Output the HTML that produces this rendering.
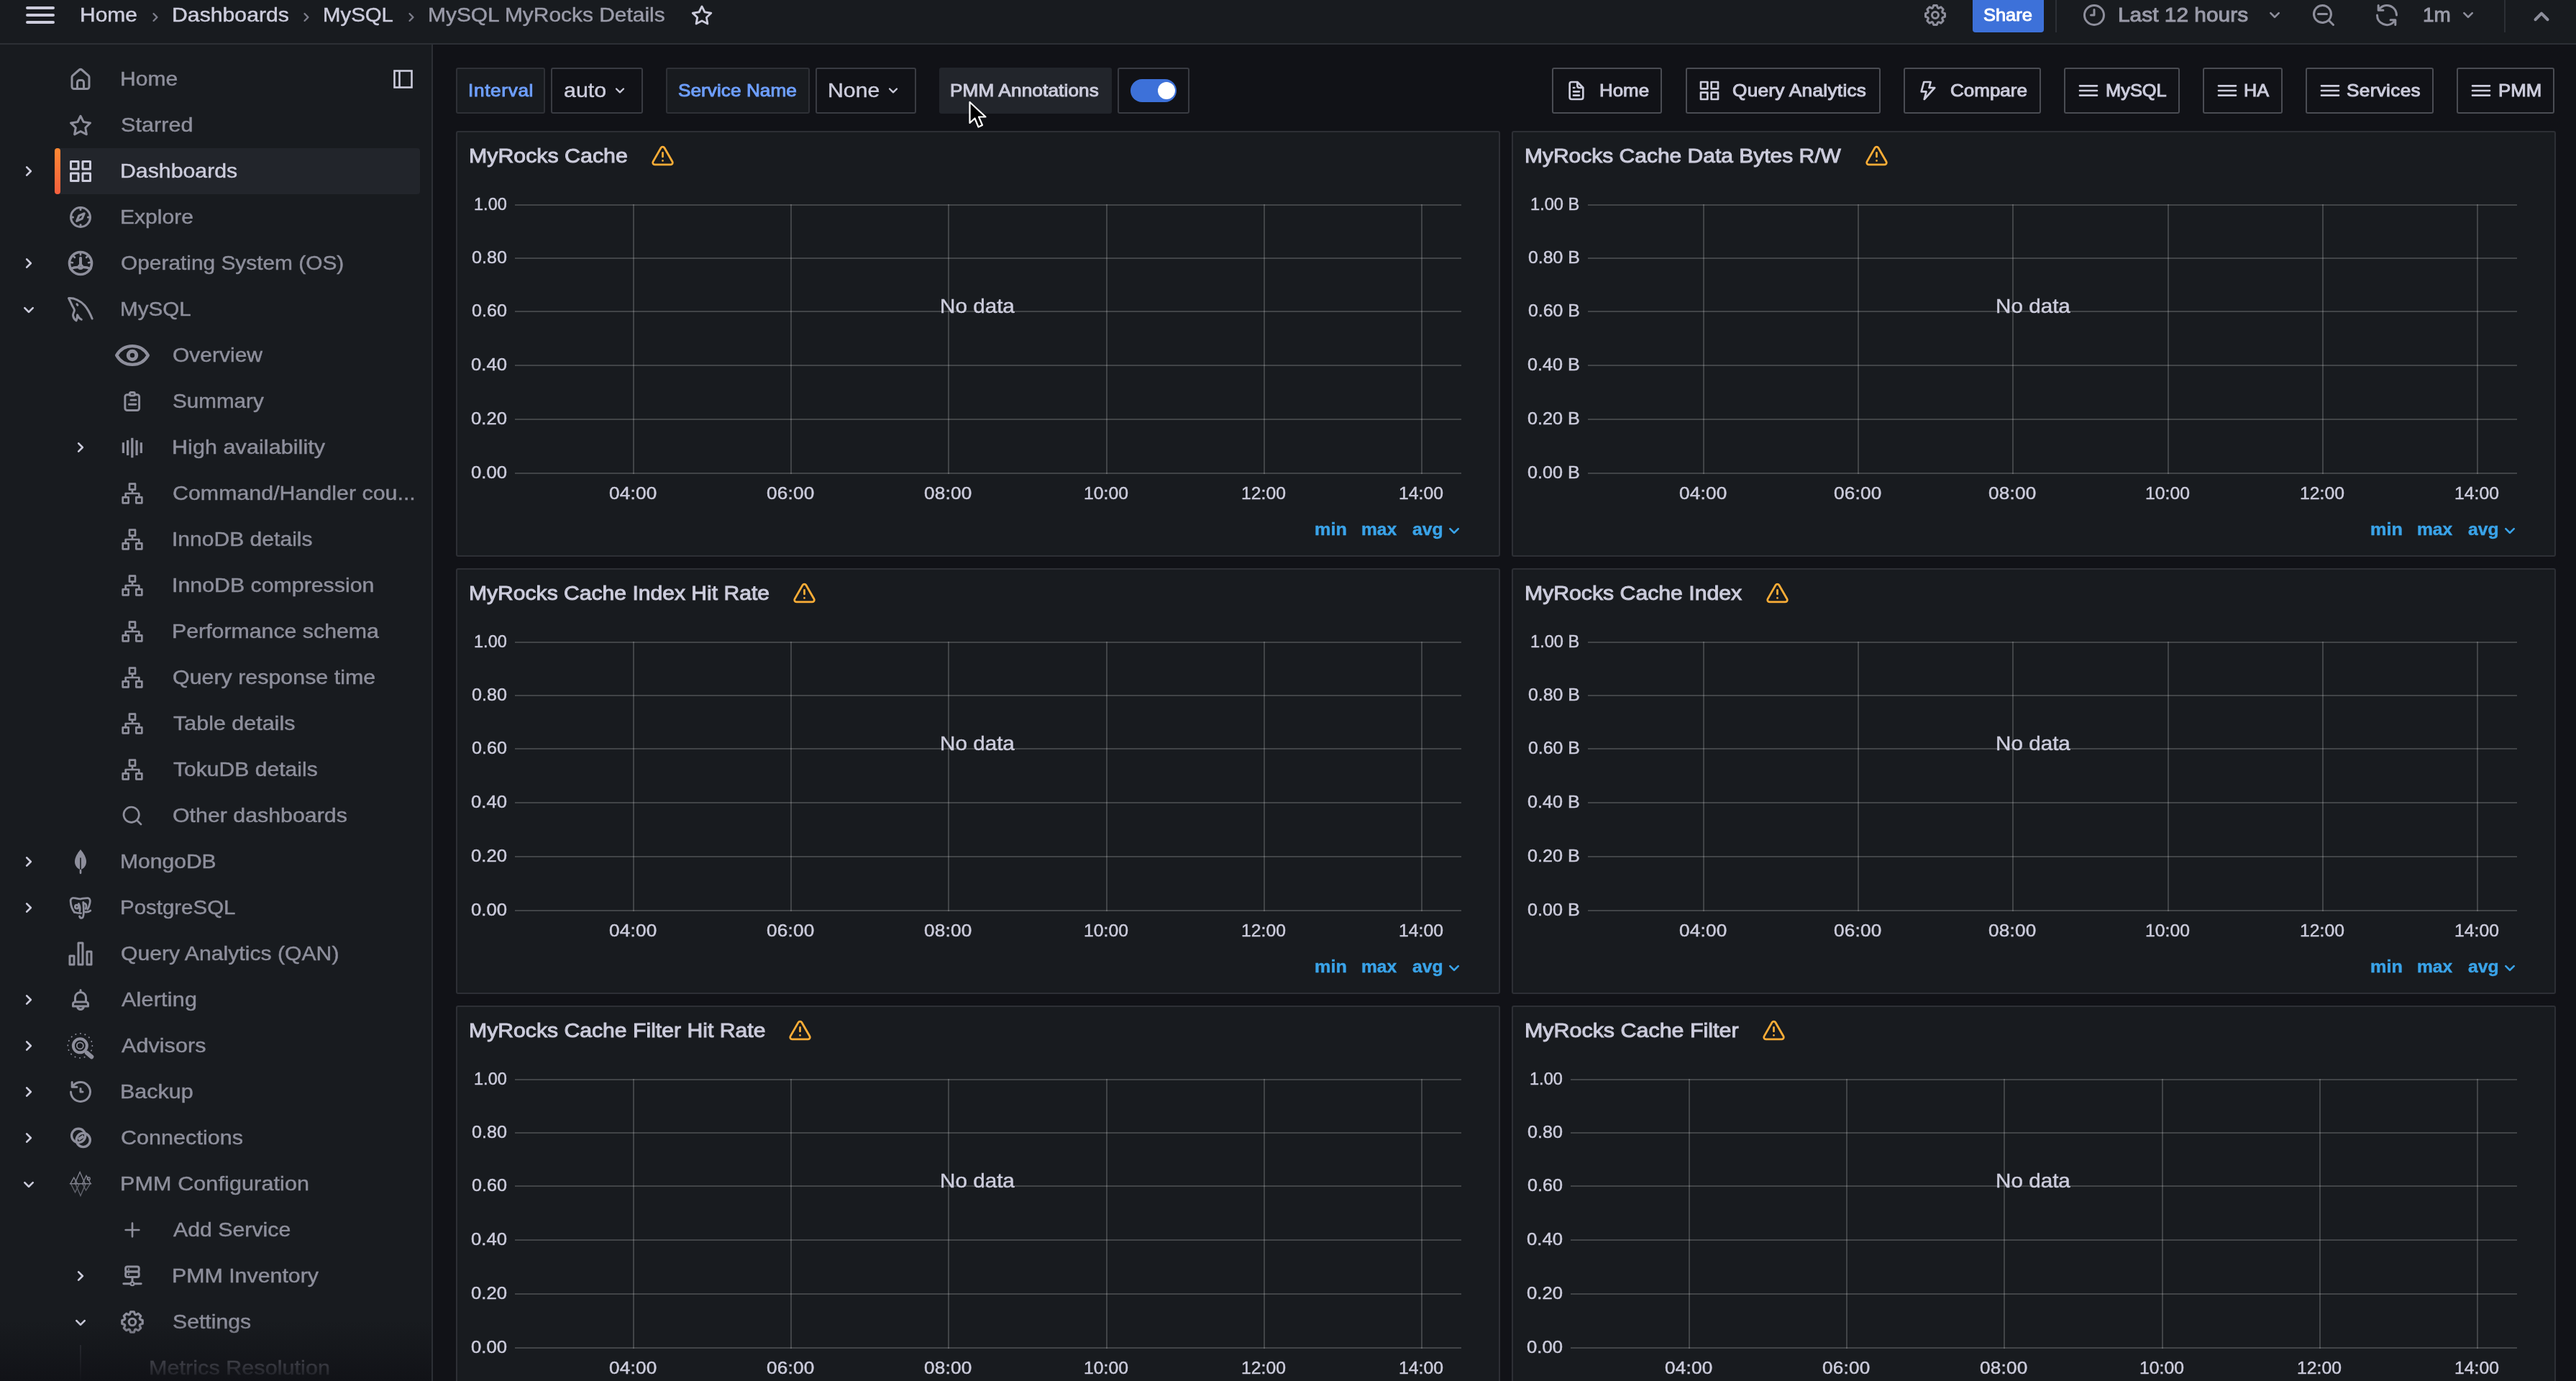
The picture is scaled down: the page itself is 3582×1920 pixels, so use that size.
<!DOCTYPE html>
<html lang="en"><head><meta charset="utf-8"><title>MySQL MyRocks Details - Dashboards - Grafana</title><style>
html,body{margin:0;padding:0}
header,nav,main,section{display:block;position:static;margin:0;padding:0}
body{width:3582px;height:1920px;overflow:hidden;position:relative;background:#111217;
font-family:"Liberation Sans",sans-serif;-webkit-font-smoothing:antialiased}
#app{position:absolute;left:0;top:0;width:3582px;height:1920px;overflow:hidden;will-change:transform}
.a{position:absolute;box-sizing:content-box}
.t{position:absolute;white-space:nowrap;line-height:1;display:block;transform-origin:0 0}
.panel{width:1448px;height:588px;background:#181b1f;border:2px solid #2d2f35;border-radius:3px}
</style></head>
<body>
<div id="app">
<header aria-label="Top bar">
<div class="a" id="topbar" style="left:0;top:0;width:3582px;height:60px;background:#181b1f;border-bottom:2px solid #2c2f35"></div>
<svg class="a" style="left:32.00px;top:-3.00px" width="48" height="48" viewBox="0 0 24 24" fill="#ccccdc"><path d="M3,8H21a1,1,0,0,0,0-2H3A1,1,0,0,0,3,8Zm18,8H3a1,1,0,0,0,0,2H21a1,1,0,0,0,0-2Zm0-5H3a1,1,0,0,0,0,2H21a1,1,0,0,0,0-2Z"/></svg>
<span class="t" style="left:110.86px;top:7.30px;font-size:28px;letter-spacing:0.000px;color:#ccccdc;transform:scaleX(1.0705);-webkit-text-stroke:0.45px #ccccdc;">Home</span>
<svg class="a" style="left:202.00px;top:9.50px" width="28" height="28" viewBox="0 0 24 24" fill="#7d7e8b"><path d="M14.83,11.29,10.59,7.05a1,1,0,0,0-1.42,0,1,1,0,0,0,0,1.41L12.71,12,9.17,15.54a1,1,0,0,0,0,1.41,1,1,0,0,0,.71.29,1,1,0,0,0,.71-.29l4.24-4.24A1,1,0,0,0,14.83,11.29Z"/></svg>
<span class="t" style="left:238.54px;top:7.30px;font-size:28px;letter-spacing:0.000px;color:#ccccdc;transform:scaleX(1.0792);-webkit-text-stroke:0.45px #ccccdc;">Dashboards</span>
<svg class="a" style="left:412.00px;top:9.50px" width="28" height="28" viewBox="0 0 24 24" fill="#7d7e8b"><path d="M14.83,11.29,10.59,7.05a1,1,0,0,0-1.42,0,1,1,0,0,0,0,1.41L12.71,12,9.17,15.54a1,1,0,0,0,0,1.41,1,1,0,0,0,.71.29,1,1,0,0,0,.71-.29l4.24-4.24A1,1,0,0,0,14.83,11.29Z"/></svg>
<span class="t" style="left:448.70px;top:7.30px;font-size:28px;letter-spacing:0.000px;color:#ccccdc;transform:scaleX(1.0487);-webkit-text-stroke:0.45px #ccccdc;">MySQL</span>
<svg class="a" style="left:558.00px;top:9.50px" width="28" height="28" viewBox="0 0 24 24" fill="#7d7e8b"><path d="M14.83,11.29,10.59,7.05a1,1,0,0,0-1.42,0,1,1,0,0,0,0,1.41L12.71,12,9.17,15.54a1,1,0,0,0,0,1.41,1,1,0,0,0,.71.29,1,1,0,0,0,.71-.29l4.24-4.24A1,1,0,0,0,14.83,11.29Z"/></svg>
<span class="t" style="left:594.86px;top:7.30px;font-size:28px;letter-spacing:0.000px;color:#9a9ba9;transform:scaleX(1.0684);-webkit-text-stroke:0.45px #9a9ba9;">MySQL MyRocks Details</span>
<svg class="a" style="left:959.00px;top:4.00px" width="34" height="34" viewBox="0 0 24 24" fill="#ccccdc"><path d="M22,9.67A1,1,0,0,0,21.14,9l-5.69-.83L12.9,3a1,1,0,0,0-1.8,0L8.55,8.16,2.86,9a1,1,0,0,0-.81.68,1,1,0,0,0,.25,1l4.13,4-1,5.68A1,1,0,0,0,6.9,21.44L12,18.77l5.1,2.67a.93.93,0,0,0,.46.12,1,1,0,0,0,.59-.19,1,1,0,0,0,.4-1l-1-5.68,4.13-4A1,1,0,0,0,22,9.67Zm-6.15,4a1,1,0,0,0-.29.88l.72,4.2-3.76-2a1.06,1.06,0,0,0-.94,0l-3.76,2,.72-4.2a1,1,0,0,0-.29-.88l-3-3,4.21-.61a1,1,0,0,0,.76-.55L12,5.7l1.88,3.82a1,1,0,0,0,.76.55l4.21.61Z"/></svg>
<svg class="a" style="left:2673.00px;top:2.70px" width="36" height="36" viewBox="0 0 24 24" fill="#8e8f9c"><path d="M21.32,9.55l-1.89-.63.89-1.78A1,1,0,0,0,20.13,6L18,3.87a1,1,0,0,0-1.15-.19l-1.78.89-.63-1.89A1,1,0,0,0,13.5,2h-3a1,1,0,0,0-.95.68L8.92,4.57,7.14,3.68A1,1,0,0,0,6,3.87L3.87,6a1,1,0,0,0-.19,1.15l.89,1.78-1.89.63A1,1,0,0,0,2,10.5v3a1,1,0,0,0,.68.95l1.89.63-.89,1.78A1,1,0,0,0,3.87,18L6,20.13a1,1,0,0,0,1.15.19l1.78-.89.63,1.89a1,1,0,0,0,.95.68h3a1,1,0,0,0,.95-.68l.63-1.89,1.78.89A1,1,0,0,0,18,20.13L20.13,18a1,1,0,0,0,.19-1.15l-.89-1.78,1.89-.63A1,1,0,0,0,22,13.5v-3A1,1,0,0,0,21.32,9.55ZM20,12.78l-1.2.4A2,2,0,0,0,17.64,16l.57,1.14-1.1,1.1L16,17.64a2,2,0,0,0-2.79,1.16l-.4,1.2H11.22l-.4-1.2A2,2,0,0,0,8,17.64l-1.14.57-1.1-1.1L6.36,16A2,2,0,0,0,5.2,13.18L4,12.78V11.22l1.2-.4A2,2,0,0,0,6.36,8L5.79,6.89l1.1-1.1L8,6.36A2,2,0,0,0,10.82,5.2l.4-1.2h1.56l.4,1.2A2,2,0,0,0,16,6.36l1.14-.57,1.1,1.1L17.64,8a2,2,0,0,0,1.16,2.79l1.2.4ZM12,8a4,4,0,1,0,4,4A4,4,0,0,0,12,8Zm0,6a2,2,0,1,1,2-2A2,2,0,0,1,12,14Z"/></svg>
<div class="a" style="left:2743px;top:-4px;width:99px;height:49px;background:#3d71d9;border-radius:4px;"></div>
<span class="t" style="left:2757.94px;top:8.68px;font-size:24px;letter-spacing:0.000px;color:#ffffff;transform:scaleX(1.0591);-webkit-text-stroke:0.95px #ffffff;">Share</span>
<div class="a" style="left:2858px;top:0px;width:2px;height:45px;background:#2c2f35;"></div>
<svg class="a" style="left:2894.00px;top:2.70px" width="36" height="36" viewBox="0 0 24 24" fill="#8e8f9c"><path d="M12,2A10,10,0,1,0,22,12,10.01114,10.01114,0,0,0,12,2Zm0,18a8,8,0,1,1,8-8A8.00917,8.00917,0,0,1,12,20ZM12,6a.99974.99974,0,0,0-1,1v4H9a1,1,0,0,0,0,2h3a.99974.99974,0,0,0,1-1V7A.99974.99974,0,0,0,12,6Z"/></svg>
<span class="t" style="left:2945.27px;top:7.30px;font-size:28px;letter-spacing:0.000px;color:#9a9ba9;transform:scaleX(1.0674);-webkit-text-stroke:0.95px #9a9ba9;">Last 12 hours</span>
<svg class="a" style="left:3147.00px;top:5.20px" width="32" height="32" viewBox="0 0 24 24" fill="#8e8f9c"><path d="M17,9.17a1,1,0,0,0-1.41,0L12,12.71,8.46,9.17a1,1,0,0,0-1.41,0,1,1,0,0,0,0,1.42l4.24,4.24a1,1,0,0,0,1.42,0L17,10.59A1,1,0,0,0,17,9.17Z"/></svg>
<svg class="a" style="left:3213.00px;top:2.70px" width="36" height="36" viewBox="0 0 24 24" fill="#8e8f9c"><path d="M21.71,20.29,18,16.61A9,9,0,1,0,16.61,18l3.68,3.68a1,1,0,0,0,1.42,0A1,1,0,0,0,21.71,20.29ZM11,18a7,7,0,1,1,7-7A7,7,0,0,1,11,18Zm4-8H7a1,1,0,0,0,0,2h8a1,1,0,0,0,0-2Z"/></svg>
<svg class="a" style="left:3301.00px;top:2.70px" width="36" height="36" viewBox="0 0 24 24" fill="#8e8f9c"><path d="M19.91,15.51H15.38a1,1,0,0,0,0,2h2.4A8,8,0,0,1,4,12a1,1,0,0,0-2,0,10,10,0,0,0,16.88,7.23V21a1,1,0,0,0,2,0V16.5A1,1,0,0,0,19.91,15.51ZM12,2A10,10,0,0,0,5.12,4.77V3a1,1,0,0,0-2,0V7.5a1,1,0,0,0,1,1h4.5a1,1,0,0,0,0-2H6.22A8,8,0,0,1,20,12a1,1,0,0,0,2,0A10,10,0,0,0,12,2Z"/></svg>
<span class="t" style="left:3369.00px;top:7.30px;font-size:28px;letter-spacing:0.000px;color:#9a9ba9;transform:scaleX(0.9980);-webkit-text-stroke:0.95px #9a9ba9;">1m</span>
<svg class="a" style="left:3416.00px;top:5.20px" width="32" height="32" viewBox="0 0 24 24" fill="#8e8f9c"><path d="M17,9.17a1,1,0,0,0-1.41,0L12,12.71,8.46,9.17a1,1,0,0,0-1.41,0,1,1,0,0,0,0,1.42l4.24,4.24a1,1,0,0,0,1.42,0L17,10.59A1,1,0,0,0,17,9.17Z"/></svg>
<div class="a" style="left:3482px;top:0px;width:2px;height:45px;background:#2c2f35;"></div>
<svg class="a" style="left:3510.00px;top:-1.20px" width="48" height="48" viewBox="0 0 24 24" fill="#8e8f9c"><path d="M17,13.41,12.71,9.17a1,1,0,0,0-1.42,0L7.05,13.41a1,1,0,0,0,0,1.42,1,1,0,0,0,1.41,0L12,11.29l3.54,3.54a1,1,0,0,0,.7.29,1,1,0,0,0,.71-.29A1,1,0,0,0,17,13.41Z"/></svg>
</header>
<nav aria-label="Navigation">
<div class="a" id="sidebar" style="left:0;top:62px;width:600px;height:1858px;background:#181b1f;border-right:2px solid #2c2f35"></div>
<div class="a" style="left:76px;top:206px;width:508px;height:64px;background:#22252b;border-radius:4px"></div>
<div class="a" style="left:76px;top:206px;width:8px;height:64px;border-radius:4px;background:linear-gradient(180deg,#ff8833,#f55f3e)"></div>
<svg class="a" style="left:545px;top:95px" width="32" height="30" viewBox="0 0 32 30" fill="none" stroke="#ccccdc" stroke-width="2.6"><rect x="3.5" y="3.5" width="24" height="23"/><line x1="10.5" y1="3.5" x2="10.5" y2="26.5"/></svg>
<svg class="a" style="left:94.00px;top:92.00px" width="36" height="36" viewBox="0 0 24 24" fill="#8e8f9c"><path d="M20,8h0L14,2.74a3,3,0,0,0-4,0L4,8a3,3,0,0,0-1,2.26V19a3,3,0,0,0,3,3H18a3,3,0,0,0,3-3V10.25A3,3,0,0,0,20,8ZM14,20H10V15a1,1,0,0,1,1-1h2a1,1,0,0,1,1,1Zm5-1a1,1,0,0,1-1,1H16V15a3,3,0,0,0-3-3H11a3,3,0,0,0-3,3v5H6a1,1,0,0,1-1-1V10.25a1,1,0,0,1,.34-.75l6-5.25a1,1,0,0,1,1.32,0l6,5.25a1,1,0,0,1,.34.75Z"/></svg>
<span class="t" style="left:166.85px;top:96.30px;font-size:28px;letter-spacing:0.000px;color:#8e8f9c;transform:scaleX(1.0746);-webkit-text-stroke:0.45px #8e8f9c;">Home</span>
<svg class="a" style="left:94.00px;top:156.00px" width="36" height="36" viewBox="0 0 24 24" fill="#8e8f9c"><path d="M22,9.67A1,1,0,0,0,21.14,9l-5.69-.83L12.9,3a1,1,0,0,0-1.8,0L8.55,8.16,2.86,9a1,1,0,0,0-.81.68,1,1,0,0,0,.25,1l4.13,4-1,5.68A1,1,0,0,0,6.9,21.44L12,18.77l5.1,2.67a.93.93,0,0,0,.46.12,1,1,0,0,0,.59-.19,1,1,0,0,0,.4-1l-1-5.68,4.13-4A1,1,0,0,0,22,9.67Zm-6.15,4a1,1,0,0,0-.29.88l.72,4.2-3.76-2a1.06,1.06,0,0,0-.94,0l-3.76,2,.72-4.2a1,1,0,0,0-.29-.88l-3-3,4.21-.61a1,1,0,0,0,.76-.55L12,5.7l1.88,3.82a1,1,0,0,0,.76.55l4.21.61Z"/></svg>
<span class="t" style="left:167.91px;top:160.30px;font-size:28px;letter-spacing:0.064px;color:#8e8f9c;transform:scaleX(1.0900);-webkit-text-stroke:0.45px #8e8f9c;">Starred</span>
<svg class="a" style="left:24.00px;top:222.00px" width="32" height="32" viewBox="0 0 24 24" fill="#ccccdc"><path d="M14.83,11.29,10.59,7.05a1,1,0,0,0-1.42,0,1,1,0,0,0,0,1.41L12.71,12,9.17,15.54a1,1,0,0,0,0,1.41,1,1,0,0,0,.71.29,1,1,0,0,0,.71-.29l4.24-4.24A1,1,0,0,0,14.83,11.29Z"/></svg>
<svg class="a" style="left:94.00px;top:220.00px" width="36" height="36" viewBox="0 0 24 24" fill="#ccccdc"><path d="M10,13H3a1,1,0,0,0-1,1v7a1,1,0,0,0,1,1h7a1,1,0,0,0,1-1V14A1,1,0,0,0,10,13ZM9,20H4V15H9ZM21,2H14a1,1,0,0,0-1,1v7a1,1,0,0,0,1,1h7a1,1,0,0,0,1-1V3A1,1,0,0,0,21,2ZM20,9H15V4h5Zm1,4H14a1,1,0,0,0-1,1v7a1,1,0,0,0,1,1h7a1,1,0,0,0,1-1V14A1,1,0,0,0,21,13Zm-1,7H15V15h5ZM10,2H3A1,1,0,0,0,2,3v7a1,1,0,0,0,1,1h7a1,1,0,0,0,1-1V3A1,1,0,0,0,10,2ZM9,9H4V4H9Z"/></svg>
<span class="t" style="left:166.84px;top:224.30px;font-size:28px;letter-spacing:0.000px;color:#ccccdc;transform:scaleX(1.0812);-webkit-text-stroke:0.45px #ccccdc;">Dashboards</span>
<svg class="a" style="left:94.00px;top:284.00px" width="36" height="36" viewBox="0 0 24 24" fill="#8e8f9c"><path d="M12,2A10,10,0,1,0,22,12,10,10,0,0,0,12,2Zm1,17.93V19a1,1,0,0,0-2,0v.93A8,8,0,0,1,4.07,13H5a1,1,0,0,0,0-2H4.07A8,8,0,0,1,11,4.07V5a1,1,0,0,0,2,0V4.07A8,8,0,0,1,19.93,11H19a1,1,0,0,0,0,2h.93A8,8,0,0,1,13,19.93ZM15.14,7.55l-5,2.12a1,1,0,0,0-.52.52l-2.12,5a1,1,0,0,0,.21,1.1,1,1,0,0,0,.7.3.93.93,0,0,0,.4-.09l5-2.12a1,1,0,0,0,.52-.52l2.12-5a1,1,0,0,0-1.31-1.31Zm-2.49,5.1-2.28,1,1-2.28,2.28-1Z"/></svg>
<span class="t" style="left:166.85px;top:288.30px;font-size:28px;letter-spacing:0.000px;color:#8e8f9c;transform:scaleX(1.0740);-webkit-text-stroke:0.45px #8e8f9c;">Explore</span>
<svg class="a" style="left:24.00px;top:350.00px" width="32" height="32" viewBox="0 0 24 24" fill="#ccccdc"><path d="M14.83,11.29,10.59,7.05a1,1,0,0,0-1.42,0,1,1,0,0,0,0,1.41L12.71,12,9.17,15.54a1,1,0,0,0,0,1.41,1,1,0,0,0,.71.29,1,1,0,0,0,.71-.29l4.24-4.24A1,1,0,0,0,14.83,11.29Z"/></svg>
<svg class="a" style="left:92.00px;top:346.00px" width="40" height="40" viewBox="0 0 24 24" fill="none" color="#8e8f9c" stroke="#8e8f9c" stroke-width="2" stroke-linecap="round" stroke-linejoin="round"><g stroke-width="2.2"><circle cx="12" cy="12" r="9.3"/><path d="M3.6 16.6C6.5 15.4 9.5 15 12 15.6C14.5 15 17.5 15.4 20.4 16.6" stroke-width="2"/><line x1="12" y1="13.4" x2="12" y2="7.6" stroke-width="2.4"/></g><circle cx="12" cy="15" r="1.6" stroke-width="1.6"/><g stroke-width="1.5"><line x1="12" y1="3.4" x2="12" y2="5"/><line x1="6" y1="6" x2="7.2" y2="7.2"/><line x1="18" y1="6" x2="16.8" y2="7.2"/><line x1="3.6" y1="11.2" x2="5.4" y2="11.6"/><line x1="20.4" y1="11.2" x2="18.6" y2="11.6"/></g></svg>
<span class="t" style="left:167.93px;top:352.30px;font-size:28px;letter-spacing:0.000px;color:#8e8f9c;transform:scaleX(1.0663);-webkit-text-stroke:0.45px #8e8f9c;">Operating System (OS)</span>
<svg class="a" style="left:24.00px;top:414.50px" width="32" height="32" viewBox="0 0 24 24" fill="#ccccdc"><path d="M17,9.17a1,1,0,0,0-1.41,0L12,12.71,8.46,9.17a1,1,0,0,0-1.41,0,1,1,0,0,0,0,1.42l4.24,4.24a1,1,0,0,0,1.42,0L17,10.59A1,1,0,0,0,17,9.17Z"/></svg>
<svg class="a" style="left:93.00px;top:411.00px" width="38" height="38" viewBox="0 0 24 24" fill="none" color="#8e8f9c" stroke="#8e8f9c" stroke-width="2" stroke-linecap="round" stroke-linejoin="round"><g stroke-width="1.9"><path d="M1.7 2.3C6 1.8 12 4.3 15.7 8.7C18.5 12 20.5 16 22.2 20.2"/><path d="M1.7 2.3C2.5 4.5 3.5 6 4.2 7.8C5 10 6.6 11.3 6.6 12.8C6.6 14.5 5 16 5.4 17.7C5.8 19.8 7 21.2 8.2 22C9 20.5 9.2 18.6 9.2 16.9C10 18.8 11.3 20.2 12.8 21"/><line x1="8.8" y1="7.4" x2="9.4" y2="8.4"/></g></svg>
<span class="t" style="left:166.88px;top:416.30px;font-size:28px;letter-spacing:0.000px;color:#8e8f9c;transform:scaleX(1.0575);-webkit-text-stroke:0.45px #8e8f9c;">MySQL</span>
<svg class="a" style="left:159.00px;top:469.00px" width="50" height="50" viewBox="0 0 24 24" fill="none" color="#8e8f9c" stroke="#8e8f9c" stroke-width="2" stroke-linecap="round" stroke-linejoin="round"><path d="M1.5 12C4 7.6 7.8 5.8 12 5.8S20 7.6 22.5 12C20 16.4 16.2 18.2 12 18.2S4 16.4 1.5 12Z" stroke-width="2.1"/><circle cx="12" cy="12" r="2.75" stroke-width="2.4"/></svg>
<span class="t" style="left:239.93px;top:480.30px;font-size:28px;letter-spacing:0.000px;color:#8e8f9c;transform:scaleX(1.0715);-webkit-text-stroke:0.45px #8e8f9c;">Overview</span>
<svg class="a" style="left:168.00px;top:542.00px" width="32" height="32" viewBox="0 0 24 24" fill="none" color="#8e8f9c" stroke="#8e8f9c" stroke-width="2" stroke-linecap="round" stroke-linejoin="round"><g stroke-width="2.2"><path d="M9.3 5H6.6C5.4 5 4.4 6 4.4 7.2V19.2C4.4 20.4 5.4 21.4 6.6 21.4H17C18.2 21.4 19.2 20.4 19.2 19.2V7.2C19.2 6 18.2 5 17 5H14.5"/><rect x="9.3" y="2.6" width="5.2" height="3.4" rx="1.2"/><line x1="10.5" y1="10.6" x2="15.6" y2="10.6"/><line x1="8.6" y1="15.2" x2="15.6" y2="15.2"/></g></svg>
<span class="t" style="left:239.94px;top:544.30px;font-size:28px;letter-spacing:-0.000px;color:#8e8f9c;transform:scaleX(1.0581);-webkit-text-stroke:0.45px #8e8f9c;">Summary</span>
<svg class="a" style="left:96.00px;top:606.00px" width="32" height="32" viewBox="0 0 24 24" fill="#ccccdc"><path d="M14.83,11.29,10.59,7.05a1,1,0,0,0-1.42,0,1,1,0,0,0,0,1.41L12.71,12,9.17,15.54a1,1,0,0,0,0,1.41,1,1,0,0,0,.71.29,1,1,0,0,0,.71-.29l4.24-4.24A1,1,0,0,0,14.83,11.29Z"/></svg>
<svg class="a" style="left:166.50px;top:605.00px" width="34" height="34" viewBox="0 0 24 24" fill="none" color="#8e8f9c" stroke="#8e8f9c" stroke-width="2" stroke-linecap="round" stroke-linejoin="round"><g stroke-width="2.3" stroke-linecap="butt"><line x1="3.1" y1="7.2" x2="3.1" y2="17.6"/><line x1="7.5" y1="5" x2="7.5" y2="19.8"/><line x1="11.86" y1="2.7" x2="11.86" y2="22.1"/><line x1="16.3" y1="5" x2="16.3" y2="19.8"/><line x1="20.7" y1="7.2" x2="20.7" y2="17.6"/></g></svg>
<span class="t" style="left:238.82px;top:608.30px;font-size:28px;letter-spacing:0.059px;color:#8e8f9c;transform:scaleX(1.0900);-webkit-text-stroke:0.45px #8e8f9c;">High availability</span>
<svg class="a" style="left:168.00px;top:670.00px" width="32" height="32" viewBox="0 0 24 24" fill="#8e8f9c"><path d="M22,15H20V12a1,1,0,0,0-1-1H13V9h2a1,1,0,0,0,1-1V2a1,1,0,0,0-1-1H9A1,1,0,0,0,8,2V8A1,1,0,0,0,9,9h2v2H5a1,1,0,0,0-1,1v3H2a1,1,0,0,0-1,1v6a1,1,0,0,0,1,1H8a1,1,0,0,0,1-1V16a1,1,0,0,0-1-1H6V13H18v2H16a1,1,0,0,0-1,1v6a1,1,0,0,0,1,1h6a1,1,0,0,0,1-1V16A1,1,0,0,0,22,15ZM7,17v4H3V17ZM10,7V3h4V7ZM21,21H17V17h4Z"/></svg>
<span class="t" style="left:239.91px;top:672.30px;font-size:28px;letter-spacing:0.000px;color:#8e8f9c;transform:scaleX(1.0853);-webkit-text-stroke:0.45px #8e8f9c;">Command/Handler cou...</span>
<svg class="a" style="left:168.00px;top:734.00px" width="32" height="32" viewBox="0 0 24 24" fill="#8e8f9c"><path d="M22,15H20V12a1,1,0,0,0-1-1H13V9h2a1,1,0,0,0,1-1V2a1,1,0,0,0-1-1H9A1,1,0,0,0,8,2V8A1,1,0,0,0,9,9h2v2H5a1,1,0,0,0-1,1v3H2a1,1,0,0,0-1,1v6a1,1,0,0,0,1,1H8a1,1,0,0,0,1-1V16a1,1,0,0,0-1-1H6V13H18v2H16a1,1,0,0,0-1,1v6a1,1,0,0,0,1,1h6a1,1,0,0,0,1-1V16A1,1,0,0,0,22,15ZM7,17v4H3V17ZM10,7V3h4V7ZM21,21H17V17h4Z"/></svg>
<span class="t" style="left:238.85px;top:736.30px;font-size:28px;letter-spacing:0.000px;color:#8e8f9c;transform:scaleX(1.0736);-webkit-text-stroke:0.45px #8e8f9c;">InnoDB details</span>
<svg class="a" style="left:168.00px;top:798.00px" width="32" height="32" viewBox="0 0 24 24" fill="#8e8f9c"><path d="M22,15H20V12a1,1,0,0,0-1-1H13V9h2a1,1,0,0,0,1-1V2a1,1,0,0,0-1-1H9A1,1,0,0,0,8,2V8A1,1,0,0,0,9,9h2v2H5a1,1,0,0,0-1,1v3H2a1,1,0,0,0-1,1v6a1,1,0,0,0,1,1H8a1,1,0,0,0,1-1V16a1,1,0,0,0-1-1H6V13H18v2H16a1,1,0,0,0-1,1v6a1,1,0,0,0,1,1h6a1,1,0,0,0,1-1V16A1,1,0,0,0,22,15ZM7,17v4H3V17ZM10,7V3h4V7ZM21,21H17V17h4Z"/></svg>
<span class="t" style="left:238.83px;top:800.30px;font-size:28px;letter-spacing:0.000px;color:#8e8f9c;transform:scaleX(1.0826);-webkit-text-stroke:0.45px #8e8f9c;">InnoDB compression</span>
<svg class="a" style="left:168.00px;top:862.00px" width="32" height="32" viewBox="0 0 24 24" fill="#8e8f9c"><path d="M22,15H20V12a1,1,0,0,0-1-1H13V9h2a1,1,0,0,0,1-1V2a1,1,0,0,0-1-1H9A1,1,0,0,0,8,2V8A1,1,0,0,0,9,9h2v2H5a1,1,0,0,0-1,1v3H2a1,1,0,0,0-1,1v6a1,1,0,0,0,1,1H8a1,1,0,0,0,1-1V16a1,1,0,0,0-1-1H6V13H18v2H16a1,1,0,0,0-1,1v6a1,1,0,0,0,1,1h6a1,1,0,0,0,1-1V16A1,1,0,0,0,22,15ZM7,17v4H3V17ZM10,7V3h4V7ZM21,21H17V17h4Z"/></svg>
<span class="t" style="left:238.84px;top:864.30px;font-size:28px;letter-spacing:0.000px;color:#8e8f9c;transform:scaleX(1.0819);-webkit-text-stroke:0.45px #8e8f9c;">Performance schema</span>
<svg class="a" style="left:168.00px;top:926.00px" width="32" height="32" viewBox="0 0 24 24" fill="#8e8f9c"><path d="M22,15H20V12a1,1,0,0,0-1-1H13V9h2a1,1,0,0,0,1-1V2a1,1,0,0,0-1-1H9A1,1,0,0,0,8,2V8A1,1,0,0,0,9,9h2v2H5a1,1,0,0,0-1,1v3H2a1,1,0,0,0-1,1v6a1,1,0,0,0,1,1H8a1,1,0,0,0,1-1V16a1,1,0,0,0-1-1H6V13H18v2H16a1,1,0,0,0-1,1v6a1,1,0,0,0,1,1h6a1,1,0,0,0,1-1V16A1,1,0,0,0,22,15ZM7,17v4H3V17ZM10,7V3h4V7ZM21,21H17V17h4Z"/></svg>
<span class="t" style="left:239.91px;top:928.30px;font-size:28px;letter-spacing:0.000px;color:#8e8f9c;transform:scaleX(1.0855);-webkit-text-stroke:0.45px #8e8f9c;">Query response time</span>
<svg class="a" style="left:168.00px;top:990.00px" width="32" height="32" viewBox="0 0 24 24" fill="#8e8f9c"><path d="M22,15H20V12a1,1,0,0,0-1-1H13V9h2a1,1,0,0,0,1-1V2a1,1,0,0,0-1-1H9A1,1,0,0,0,8,2V8A1,1,0,0,0,9,9h2v2H5a1,1,0,0,0-1,1v3H2a1,1,0,0,0-1,1v6a1,1,0,0,0,1,1H8a1,1,0,0,0,1-1V16a1,1,0,0,0-1-1H6V13H18v2H16a1,1,0,0,0-1,1v6a1,1,0,0,0,1,1h6a1,1,0,0,0,1-1V16A1,1,0,0,0,22,15ZM7,17v4H3V17ZM10,7V3h4V7ZM21,21H17V17h4Z"/></svg>
<span class="t" style="left:241.00px;top:992.30px;font-size:28px;letter-spacing:0.000px;color:#8e8f9c;transform:scaleX(1.0882);-webkit-text-stroke:0.45px #8e8f9c;">Table details</span>
<svg class="a" style="left:168.00px;top:1054.00px" width="32" height="32" viewBox="0 0 24 24" fill="#8e8f9c"><path d="M22,15H20V12a1,1,0,0,0-1-1H13V9h2a1,1,0,0,0,1-1V2a1,1,0,0,0-1-1H9A1,1,0,0,0,8,2V8A1,1,0,0,0,9,9h2v2H5a1,1,0,0,0-1,1v3H2a1,1,0,0,0-1,1v6a1,1,0,0,0,1,1H8a1,1,0,0,0,1-1V16a1,1,0,0,0-1-1H6V13H18v2H16a1,1,0,0,0-1,1v6a1,1,0,0,0,1,1h6a1,1,0,0,0,1-1V16A1,1,0,0,0,22,15ZM7,17v4H3V17ZM10,7V3h4V7ZM21,21H17V17h4Z"/></svg>
<span class="t" style="left:241.00px;top:1056.30px;font-size:28px;letter-spacing:0.000px;color:#8e8f9c;transform:scaleX(1.0745);-webkit-text-stroke:0.45px #8e8f9c;">TokuDB details</span>
<svg class="a" style="left:167.60px;top:1118.00px" width="32" height="32" viewBox="0 0 24 24" fill="#8e8f9c"><path d="M21.71,20.29,18,16.61A9,9,0,1,0,16.61,18l3.68,3.68a1,1,0,0,0,1.42,0A1,1,0,0,0,21.71,20.29ZM11,18a7,7,0,1,1,7-7A7,7,0,0,1,11,18Z"/></svg>
<span class="t" style="left:239.92px;top:1120.30px;font-size:28px;letter-spacing:0.000px;color:#8e8f9c;transform:scaleX(1.0836);-webkit-text-stroke:0.45px #8e8f9c;">Other dashboards</span>
<svg class="a" style="left:24.00px;top:1182.00px" width="32" height="32" viewBox="0 0 24 24" fill="#ccccdc"><path d="M14.83,11.29,10.59,7.05a1,1,0,0,0-1.42,0,1,1,0,0,0,0,1.41L12.71,12,9.17,15.54a1,1,0,0,0,0,1.41,1,1,0,0,0,.71.29,1,1,0,0,0,.71-.29l4.24-4.24A1,1,0,0,0,14.83,11.29Z"/></svg>
<svg class="a" style="left:93.00px;top:1179.00px" width="38" height="38" viewBox="0 0 24 24" fill="none" color="#8e8f9c" stroke="#8e8f9c" stroke-width="2" stroke-linecap="round" stroke-linejoin="round"><path d="M12 1.3C9 5 6.95 8.5 6.95 12C6.95 15.5 9 18 12 19.2C15 18 17.05 15.5 17.05 12C17.05 8.5 15 5 12 1.3Z" fill="currentColor" stroke="none"/><line x1="12" y1="8.6" x2="12" y2="19.4" stroke="#181b1f" stroke-width="1" stroke-linecap="butt"/><line x1="12" y1="19.6" x2="12" y2="22" stroke-width="1.7"/></svg>
<span class="t" style="left:166.85px;top:1184.30px;font-size:28px;letter-spacing:0.000px;color:#8e8f9c;transform:scaleX(1.0736);-webkit-text-stroke:0.45px #8e8f9c;">MongoDB</span>
<svg class="a" style="left:24.00px;top:1246.00px" width="32" height="32" viewBox="0 0 24 24" fill="#ccccdc"><path d="M14.83,11.29,10.59,7.05a1,1,0,0,0-1.42,0,1,1,0,0,0,0,1.41L12.71,12,9.17,15.54a1,1,0,0,0,0,1.41,1,1,0,0,0,.71.29,1,1,0,0,0,.71-.29l4.24-4.24A1,1,0,0,0,14.83,11.29Z"/></svg>
<svg class="a" style="left:94.25px;top:1244.25px" width="35.5" height="35.5" viewBox="0 0 24 24" fill="none" color="#8e8f9c" stroke="#8e8f9c" stroke-width="2" stroke-linecap="round" stroke-linejoin="round"><g stroke-width="1.9"><path d="M6.4 16.4C4.5 14 3 10 2.8 6.2C2.7 4 4 2.9 5.6 3C8 3 10 4.2 12.4 3.9C15 3.5 17 2.8 19.3 3.2C21.3 3.6 21.4 6 20.9 8C20.5 10 19.8 12 18.8 13.5"/><path d="M6.4 16.4C8.5 17.2 10.5 17.3 12.6 17.3"/><path d="M14.7 7.1C14.9 10 15.3 14 15.1 17.2C15 19.5 14.6 21.9 13.2 21.9C12.2 21.9 11.4 21.2 11.2 20.2"/><path d="M21.5 14.9C20 16 18.5 16.4 16.5 16.2"/><circle cx="8.7" cy="11.2" r="1.7"/><path d="M10.4 8.4C11.6 10.5 11.8 13 11.4 15.3"/><path d="M15.8 8C17.5 8.5 18.2 10.5 17 13.2"/></g></svg>
<span class="t" style="left:166.90px;top:1248.30px;font-size:28px;letter-spacing:0.000px;color:#8e8f9c;transform:scaleX(1.0517);-webkit-text-stroke:0.45px #8e8f9c;">PostgreSQL</span>
<svg class="a" style="left:94.00px;top:1308.00px" width="36" height="36" viewBox="0 0 24 24" fill="#8e8f9c"><path d="M6,13H2a1,1,0,0,0-1,1v8a1,1,0,0,0,1,1H6a1,1,0,0,0,1-1V14A1,1,0,0,0,6,13ZM5,21H3V15H5ZM22,9H18a1,1,0,0,0-1,1V22a1,1,0,0,0,1,1h4a1,1,0,0,0,1-1V10A1,1,0,0,0,22,9ZM21,21H19V11h2ZM14,1H10A1,1,0,0,0,9,2V22a1,1,0,0,0,1,1h4a1,1,0,0,0,1-1V2A1,1,0,0,0,14,1ZM13,21H11V3h2Z"/></svg>
<span class="t" style="left:167.92px;top:1312.30px;font-size:28px;letter-spacing:0.000px;color:#8e8f9c;transform:scaleX(1.0775);-webkit-text-stroke:0.45px #8e8f9c;">Query Analytics (QAN)</span>
<svg class="a" style="left:24.00px;top:1374.00px" width="32" height="32" viewBox="0 0 24 24" fill="#ccccdc"><path d="M14.83,11.29,10.59,7.05a1,1,0,0,0-1.42,0,1,1,0,0,0,0,1.41L12.71,12,9.17,15.54a1,1,0,0,0,0,1.41,1,1,0,0,0,.71.29,1,1,0,0,0,.71-.29l4.24-4.24A1,1,0,0,0,14.83,11.29Z"/></svg>
<svg class="a" style="left:94.00px;top:1372.00px" width="36" height="36" viewBox="0 0 24 24" fill="#8e8f9c"><path d="M18,13.18V10a6,6,0,0,0-5-5.91V3a1,1,0,0,0-2,0V4.09A6,6,0,0,0,6,10v3.18A3,3,0,0,0,4,16v2a1,1,0,0,0,1,1H8.14a4,4,0,0,0,7.72,0H19a1,1,0,0,0,1-1V16A3,3,0,0,0,18,13.18ZM8,10a4,4,0,0,1,8,0v3H8Zm4,10a2,2,0,0,1-1.72-1h3.44A2,2,0,0,1,12,20Zm6-3H6V16a1,1,0,0,1,1-1H17a1,1,0,0,1,1,1Z"/></svg>
<span class="t" style="left:169.00px;top:1376.30px;font-size:28px;letter-spacing:0.188px;color:#8e8f9c;transform:scaleX(1.0900);-webkit-text-stroke:0.45px #8e8f9c;">Alerting</span>
<svg class="a" style="left:24.00px;top:1438.00px" width="32" height="32" viewBox="0 0 24 24" fill="#ccccdc"><path d="M14.83,11.29,10.59,7.05a1,1,0,0,0-1.42,0,1,1,0,0,0,0,1.41L12.71,12,9.17,15.54a1,1,0,0,0,0,1.41,1,1,0,0,0,.71.29,1,1,0,0,0,.71-.29l4.24-4.24A1,1,0,0,0,14.83,11.29Z"/></svg>
<svg class="a" style="left:92.00px;top:1434.00px" width="40" height="40" viewBox="0 0 24 24" fill="none" color="#8e8f9c" stroke="#8e8f9c" stroke-width="2" stroke-linecap="round" stroke-linejoin="round"><circle cx="11.6" cy="11.9" r="5.7" stroke-width="2.4"/><circle cx="11.6" cy="11.9" r="2.7" stroke-width="1"/><line x1="17.3" y1="17.8" x2="21.2" y2="21.2" stroke-width="3.6"/><circle cx="11.6" cy="11.9" r="10.2" stroke-width="1.1" stroke-dasharray="0.2 3.8"/></svg>
<span class="t" style="left:169.00px;top:1440.30px;font-size:28px;letter-spacing:0.047px;color:#8e8f9c;transform:scaleX(1.0900);-webkit-text-stroke:0.45px #8e8f9c;">Advisors</span>
<svg class="a" style="left:24.00px;top:1502.00px" width="32" height="32" viewBox="0 0 24 24" fill="#ccccdc"><path d="M14.83,11.29,10.59,7.05a1,1,0,0,0-1.42,0,1,1,0,0,0,0,1.41L12.71,12,9.17,15.54a1,1,0,0,0,0,1.41,1,1,0,0,0,.71.29,1,1,0,0,0,.71-.29l4.24-4.24A1,1,0,0,0,14.83,11.29Z"/></svg>
<svg class="a" style="left:94.00px;top:1500.00px" width="36" height="36" viewBox="0 0 24 24" fill="#8e8f9c"><path d="M12,2A10,10,0,0,0,5.12,4.77V3a1,1,0,0,0-2,0V7.5a1,1,0,0,0,1,1H8.62a1,1,0,0,0,0-2H6.22A8,8,0,1,1,4,12a1,1,0,0,0-2,0A10,10,0,1,0,12,2Zm0,6a1,1,0,0,0-1,1v3a1,1,0,0,0,1,1h2a1,1,0,0,0,0-2H13V9A1,1,0,0,0,12,8Z"/></svg>
<span class="t" style="left:166.82px;top:1504.30px;font-size:28px;letter-spacing:-0.000px;color:#8e8f9c;transform:scaleX(1.0890);-webkit-text-stroke:0.45px #8e8f9c;">Backup</span>
<svg class="a" style="left:24.00px;top:1566.00px" width="32" height="32" viewBox="0 0 24 24" fill="#ccccdc"><path d="M14.83,11.29,10.59,7.05a1,1,0,0,0-1.42,0,1,1,0,0,0,0,1.41L12.71,12,9.17,15.54a1,1,0,0,0,0,1.41,1,1,0,0,0,.71.29,1,1,0,0,0,.71-.29l4.24-4.24A1,1,0,0,0,14.83,11.29Z"/></svg>
<svg class="a" style="left:94.00px;top:1564.00px" width="36" height="36" viewBox="0 0 24 24" fill="none" color="#8e8f9c" stroke="#8e8f9c" stroke-width="2" stroke-linecap="round" stroke-linejoin="round"><circle cx="10.1" cy="9.9" r="6.4" stroke-width="2.2"/><circle cx="14.5" cy="14" r="6.4" stroke-width="2.2"/><line x1="9.9" y1="13.5" x2="14.9" y2="10.3" stroke-width="2.8" stroke-linecap="butt"/></svg>
<span class="t" style="left:167.91px;top:1568.30px;font-size:28px;letter-spacing:0.029px;color:#8e8f9c;transform:scaleX(1.0900);-webkit-text-stroke:0.45px #8e8f9c;">Connections</span>
<svg class="a" style="left:24.00px;top:1630.50px" width="32" height="32" viewBox="0 0 24 24" fill="#ccccdc"><path d="M17,9.17a1,1,0,0,0-1.41,0L12,12.71,8.46,9.17a1,1,0,0,0-1.41,0,1,1,0,0,0,0,1.42l4.24,4.24a1,1,0,0,0,1.42,0L17,10.59A1,1,0,0,0,17,9.17Z"/></svg>
<svg class="a" style="left:93.00px;top:1627.00px" width="38" height="38" viewBox="0 0 24 24" fill="none" color="#8e8f9c" stroke="#8e8f9c" stroke-width="2" stroke-linecap="round" stroke-linejoin="round"><g stroke-width="0.85" stroke-linejoin="miter" opacity="0.9"><path d="M11.44 1.6L15.96 11.8H6.92Z"/><path d="M6.13 6.4L9.18 11.8H3.2Z"/><path d="M17.1 4.7L20.8 11.8H13.7Z"/><circle cx="19.1" cy="7.4" r="1.25"/><line x1="2.7" y1="11.8" x2="21.3" y2="11.8"/><g opacity="0.7"><path d="M7.5 11.8L12 22.4L16.5 11.8"/><path d="M3.5 11.8L7.26 19.4L10.9 11.8"/><path d="M13.7 11.8L16.75 17.7L20.5 11.8"/></g></g></svg>
<span class="t" style="left:166.82px;top:1632.30px;font-size:28px;letter-spacing:0.102px;color:#8e8f9c;transform:scaleX(1.0900);-webkit-text-stroke:0.45px #8e8f9c;">PMM Configuration</span>
<svg class="a" style="left:168.00px;top:1694.00px" width="32" height="32" viewBox="0 0 24 24" fill="#8e8f9c"><path d="M19,11H13V5a1,1,0,0,0-2,0v6H5a1,1,0,0,0,0,2h6v6a1,1,0,0,0,2,0V13h6a1,1,0,0,0,0-2Z"/></svg>
<span class="t" style="left:241.00px;top:1696.30px;font-size:28px;letter-spacing:0.000px;color:#8e8f9c;transform:scaleX(1.0818);-webkit-text-stroke:0.45px #8e8f9c;">Add Service</span>
<svg class="a" style="left:96.00px;top:1758.00px" width="32" height="32" viewBox="0 0 24 24" fill="#ccccdc"><path d="M14.83,11.29,10.59,7.05a1,1,0,0,0-1.42,0,1,1,0,0,0,0,1.41L12.71,12,9.17,15.54a1,1,0,0,0,0,1.41,1,1,0,0,0,.71.29,1,1,0,0,0,.71-.29l4.24-4.24A1,1,0,0,0,14.83,11.29Z"/></svg>
<svg class="a" style="left:167.00px;top:1757.00px" width="34" height="34" viewBox="0 0 24 24" fill="none" color="#8e8f9c" stroke="#8e8f9c" stroke-width="2" stroke-linecap="round" stroke-linejoin="round"><g stroke-width="2.1"><rect x="5.4" y="2.8" width="13.1" height="5" rx="1.7"/><rect x="5.4" y="7.8" width="13.1" height="5.2" rx="1.7"/><line x1="12" y1="13" x2="12" y2="17.6"/><line x1="3.4" y1="19.6" x2="9.8" y2="19.6"/><line x1="14.2" y1="19.6" x2="20.6" y2="19.6"/></g><circle cx="12" cy="19.6" r="1.7" stroke-width="1.6"/><line x1="8.3" y1="5.3" x2="8.5" y2="5.3" stroke-width="1.6"/><line x1="8.3" y1="10.4" x2="8.5" y2="10.4" stroke-width="1.6"/></svg>
<span class="t" style="left:238.83px;top:1760.30px;font-size:28px;letter-spacing:-0.000px;color:#8e8f9c;transform:scaleX(1.0833);-webkit-text-stroke:0.45px #8e8f9c;">PMM Inventory</span>
<svg class="a" style="left:96.00px;top:1822.50px" width="32" height="32" viewBox="0 0 24 24" fill="#ccccdc"><path d="M17,9.17a1,1,0,0,0-1.41,0L12,12.71,8.46,9.17a1,1,0,0,0-1.41,0,1,1,0,0,0,0,1.42l4.24,4.24a1,1,0,0,0,1.42,0L17,10.59A1,1,0,0,0,17,9.17Z"/></svg>
<svg class="a" style="left:165.00px;top:1819.00px" width="38" height="38" viewBox="0 0 24 24" fill="#8e8f9c"><path d="M21.32,9.55l-1.89-.63.89-1.78A1,1,0,0,0,20.13,6L18,3.87a1,1,0,0,0-1.15-.19l-1.78.89-.63-1.89A1,1,0,0,0,13.5,2h-3a1,1,0,0,0-.95.68L8.92,4.57,7.14,3.68A1,1,0,0,0,6,3.87L3.87,6a1,1,0,0,0-.19,1.15l.89,1.78-1.89.63A1,1,0,0,0,2,10.5v3a1,1,0,0,0,.68.95l1.89.63-.89,1.78A1,1,0,0,0,3.87,18L6,20.13a1,1,0,0,0,1.15.19l1.78-.89.63,1.89a1,1,0,0,0,.95.68h3a1,1,0,0,0,.95-.68l.63-1.89,1.78.89A1,1,0,0,0,18,20.13L20.13,18a1,1,0,0,0,.19-1.15l-.89-1.78,1.89-.63A1,1,0,0,0,22,13.5v-3A1,1,0,0,0,21.32,9.55ZM20,12.78l-1.2.4A2,2,0,0,0,17.64,16l.57,1.14-1.1,1.1L16,17.64a2,2,0,0,0-2.79,1.16l-.4,1.2H11.22l-.4-1.2A2,2,0,0,0,8,17.64l-1.14.57-1.1-1.1L6.36,16A2,2,0,0,0,5.2,13.18L4,12.78V11.22l1.2-.4A2,2,0,0,0,6.36,8L5.79,6.89l1.1-1.1L8,6.36A2,2,0,0,0,10.82,5.2l.4-1.2h1.56l.4,1.2A2,2,0,0,0,16,6.36l1.14-.57,1.1,1.1L17.64,8a2,2,0,0,0,1.16,2.79l1.2.4ZM12,8a4,4,0,1,0,4,4A4,4,0,0,0,12,8Zm0,6a2,2,0,1,1,2-2A2,2,0,0,1,12,14Z"/></svg>
<span class="t" style="left:239.92px;top:1824.30px;font-size:28px;letter-spacing:0.000px;color:#8e8f9c;transform:scaleX(1.0789);-webkit-text-stroke:0.45px #8e8f9c;">Settings</span>
<div class="a" style="left:111px;top:1870px;width:2px;height:60px;background:#33353c;"></div>
<span class="t" style="left:206.82px;top:1887.70px;font-size:28px;letter-spacing:0.047px;color:#8e8f9c;transform:scaleX(1.0900);-webkit-text-stroke:0.45px #8e8f9c;">Metrics Resolution</span>
<div class="a" style="left:0;top:1836px;width:600px;height:84px;background:linear-gradient(180deg,rgba(17,18,23,0),rgba(17,18,23,0.95))"></div>
</nav>
<main>
<section aria-label="Dashboard controls">
<div class="a" style="left:634px;top:94px;width:120px;height:60px;background:#181b1f;border:2px solid #2e3036;border-radius:3px;"></div>
<span class="t" style="left:650.82px;top:113.68px;font-size:24px;letter-spacing:0.609px;color:#6e9fff;transform:scaleX(1.0900);-webkit-text-stroke:0.95px #6e9fff;">Interval</span>
<div class="a" style="left:766px;top:94px;width:124px;height:60px;background:#111217;border:2px solid #393b42;border-radius:3px;"></div>
<span class="t" style="left:783.52px;top:111.70px;font-size:28px;letter-spacing:0.000px;color:#ccccdc;transform:scaleX(1.0846);-webkit-text-stroke:0.45px #ccccdc;">auto</span>
<svg class="a" style="left:848.00px;top:112.00px" width="28" height="28" viewBox="0 0 24 24" fill="#ccccdc"><path d="M17,9.17a1,1,0,0,0-1.41,0L12,12.71,8.46,9.17a1,1,0,0,0-1.41,0,1,1,0,0,0,0,1.42l4.24,4.24a1,1,0,0,0,1.42,0L17,10.59A1,1,0,0,0,17,9.17Z"/></svg>
<div class="a" style="left:926px;top:94px;width:196px;height:60px;background:#181b1f;border:2px solid #2e3036;border-radius:3px;"></div>
<span class="t" style="left:942.91px;top:113.68px;font-size:24px;letter-spacing:0.049px;color:#6e9fff;transform:scaleX(1.0900);-webkit-text-stroke:0.95px #6e9fff;">Service Name</span>
<div class="a" style="left:1134px;top:94px;width:136px;height:60px;background:#111217;border:2px solid #393b42;border-radius:3px;"></div>
<span class="t" style="left:1150.84px;top:111.70px;font-size:28px;letter-spacing:0.000px;color:#ccccdc;transform:scaleX(1.0813);-webkit-text-stroke:0.45px #ccccdc;">None</span>
<svg class="a" style="left:1228.00px;top:112.00px" width="28" height="28" viewBox="0 0 24 24" fill="#ccccdc"><path d="M17,9.17a1,1,0,0,0-1.41,0L12,12.71,8.46,9.17a1,1,0,0,0-1.41,0,1,1,0,0,0,0,1.42l4.24,4.24a1,1,0,0,0,1.42,0L17,10.59A1,1,0,0,0,17,9.17Z"/></svg>
<div class="a" style="left:1306px;top:94px;width:240px;height:64px;background:#22252b;border-radius:3px;"></div>
<span class="t" style="left:1321.31px;top:113.68px;font-size:24px;letter-spacing:0.119px;color:#ccccdc;transform:scaleX(1.0900);-webkit-text-stroke:0.95px #ccccdc;">PMM Annotations</span>
<div class="a" style="left:1554px;top:94px;width:96px;height:60px;background:#111217;border:2px solid #393b42;border-radius:3px;"></div>
<div class="a" style="left:1572px;top:110px;width:64px;height:32px;background:#3d71d9;border-radius:16px;"></div>
<div class="a" style="left:1610px;top:114px;width:24px;height:24px;border-radius:12px;background:#fff"></div>
<div class="a" style="left:2158px;top:94px;width:149px;height:60px;border:2px solid #4a4c53;border-radius:3px;"></div>
<svg class="a" style="left:2176.00px;top:110.00px" width="32" height="32" viewBox="0 0 24 24" fill="#ccccdc"><path d="M9,10h1a1,1,0,0,0,0-2H9a1,1,0,0,0,0,2Zm0,2a1,1,0,0,0,0,2h6a1,1,0,0,0,0-2ZM20,8.94a1.31,1.31,0,0,0-.06-.27l0-.09a1.07,1.07,0,0,0-.19-.28h0l-6-6h0a1.07,1.07,0,0,0-.28-.19.32.32,0,0,0-.09,0A.88.88,0,0,0,13.05,2H7A3,3,0,0,0,4,5V19a3,3,0,0,0,3,3H17a3,3,0,0,0,3-3V9S20,9,20,8.94ZM14,5.41,16.59,8H15a1,1,0,0,1-1-1ZM18,19a1,1,0,0,1-1,1H7a1,1,0,0,1-1-1V5A1,1,0,0,1,7,4h5V7a3,3,0,0,0,3,3h3Zm-3-3H9a1,1,0,0,0,0,2h6a1,1,0,0,0,0-2Z"/></svg>
<span class="t" style="left:2223.62px;top:113.68px;font-size:24px;letter-spacing:0.000px;color:#ccccdc;transform:scaleX(1.0786);-webkit-text-stroke:0.95px #ccccdc;">Home</span>
<div class="a" style="left:2344px;top:94px;width:267px;height:60px;border:2px solid #4a4c53;border-radius:3px;"></div>
<svg class="a" style="left:2360.80px;top:110.00px" width="32" height="32" viewBox="0 0 24 24" fill="#ccccdc"><path d="M10,13H3a1,1,0,0,0-1,1v7a1,1,0,0,0,1,1h7a1,1,0,0,0,1-1V14A1,1,0,0,0,10,13ZM9,20H4V15H9ZM21,2H14a1,1,0,0,0-1,1v7a1,1,0,0,0,1,1h7a1,1,0,0,0,1-1V3A1,1,0,0,0,21,2ZM20,9H15V4h5Zm1,4H14a1,1,0,0,0-1,1v7a1,1,0,0,0,1,1h7a1,1,0,0,0,1-1V14A1,1,0,0,0,21,13Zm-1,7H15V15h5ZM10,2H3A1,1,0,0,0,2,3v7a1,1,0,0,0,1,1h7a1,1,0,0,0,1-1V3A1,1,0,0,0,10,2ZM9,9H4V4H9Z"/></svg>
<span class="t" style="left:2408.61px;top:113.68px;font-size:24px;letter-spacing:0.276px;color:#ccccdc;transform:scaleX(1.0900);-webkit-text-stroke:0.95px #ccccdc;">Query Analytics</span>
<div class="a" style="left:2647px;top:94px;width:187px;height:60px;border:2px solid #4a4c53;border-radius:3px;"></div>
<svg class="a" style="left:2664.50px;top:110.00px" width="32" height="32" viewBox="0 0 24 24" fill="#ccccdc"><path d="M19.87,8.6A1,1,0,0,0,19,8H14.42l1.27-4.74a1,1,0,0,0-.17-.87A1,1,0,0,0,14.73,2h-7a1,1,0,0,0-1,.74l-2.68,10a1,1,0,0,0,.17.87,1,1,0,0,0,.8.39H8.89L7.08,20.74a1,1,0,0,0,1.71.93l10.9-12A1,1,0,0,0,19.87,8.6Zm-9.79,8.68,1.07-4a1,1,0,0,0-.17-.87,1,1,0,0,0-.79-.39H6.35L8.49,4h4.93L12.15,8.74a1,1,0,0,0,1,1.26h3.57Z"/></svg>
<span class="t" style="left:2712.42px;top:113.68px;font-size:24px;letter-spacing:0.000px;color:#ccccdc;transform:scaleX(1.0836);-webkit-text-stroke:0.95px #ccccdc;">Compare</span>
<div class="a" style="left:2870px;top:94px;width:157px;height:60px;border:2px solid #4a4c53;border-radius:3px;"></div>
<svg class="a" style="left:2888.00px;top:110.00px" width="32" height="32" viewBox="0 0 24 24" fill="#ccccdc"><path d="M3,8H21a1,1,0,0,0,0-2H3A1,1,0,0,0,3,8Zm18,8H3a1,1,0,0,0,0,2H21a1,1,0,0,0,0-2Zm0-5H3a1,1,0,0,0,0,2H21a1,1,0,0,0,0-2Z"/></svg>
<span class="t" style="left:2927.64px;top:113.68px;font-size:24px;letter-spacing:0.000px;color:#ccccdc;transform:scaleX(1.0589);-webkit-text-stroke:0.95px #ccccdc;">MySQL</span>
<div class="a" style="left:3063px;top:94px;width:107px;height:60px;border:2px solid #4a4c53;border-radius:3px;"></div>
<svg class="a" style="left:3081.00px;top:110.00px" width="32" height="32" viewBox="0 0 24 24" fill="#ccccdc"><path d="M3,8H21a1,1,0,0,0,0-2H3A1,1,0,0,0,3,8Zm18,8H3a1,1,0,0,0,0,2H21a1,1,0,0,0,0-2Zm0-5H3a1,1,0,0,0,0,2H21a1,1,0,0,0,0-2Z"/></svg>
<span class="t" style="left:3120.45px;top:113.68px;font-size:24px;letter-spacing:0.000px;color:#ccccdc;transform:scaleX(1.0516);-webkit-text-stroke:0.95px #ccccdc;">HA</span>
<div class="a" style="left:3206px;top:94px;width:174px;height:60px;border:2px solid #4a4c53;border-radius:3px;"></div>
<svg class="a" style="left:3224.00px;top:110.00px" width="32" height="32" viewBox="0 0 24 24" fill="#ccccdc"><path d="M3,8H21a1,1,0,0,0,0-2H3A1,1,0,0,0,3,8Zm18,8H3a1,1,0,0,0,0,2H21a1,1,0,0,0,0-2Zm0-5H3a1,1,0,0,0,0,2H21a1,1,0,0,0,0-2Z"/></svg>
<span class="t" style="left:3263.41px;top:113.68px;font-size:24px;letter-spacing:0.299px;color:#ccccdc;transform:scaleX(1.0900);-webkit-text-stroke:0.95px #ccccdc;">Services</span>
<div class="a" style="left:3416px;top:94px;width:132px;height:60px;border:2px solid #4a4c53;border-radius:3px;"></div>
<svg class="a" style="left:3434.00px;top:110.00px" width="32" height="32" viewBox="0 0 24 24" fill="#ccccdc"><path d="M3,8H21a1,1,0,0,0,0-2H3A1,1,0,0,0,3,8Zm18,8H3a1,1,0,0,0,0,2H21a1,1,0,0,0,0-2Zm0-5H3a1,1,0,0,0,0,2H21a1,1,0,0,0,0-2Z"/></svg>
<span class="t" style="left:3473.53px;top:113.68px;font-size:24px;letter-spacing:-0.000px;color:#ccccdc;transform:scaleX(1.0741);-webkit-text-stroke:0.95px #ccccdc;">PMM</span>
</section>
<section aria-label="MyRocks Cache">
<div class="a panel" style="left:634px;top:182px"></div>
<span class="t" style="left:651.83px;top:202.50px;font-size:28px;letter-spacing:0.000px;color:#ccccdc;transform:scaleX(1.0832);-webkit-text-stroke:0.95px #ccccdc;">MyRocks Cache</span>
<svg class="a" style="left:904.70px;top:199.70px" width="33" height="33" viewBox="0 0 24 24" fill="#fbad37"><path d="M12,16a1,1,0,1,0,1,1A1,1,0,0,0,12,16Zm10.67,1.47-8.05-14a3,3,0,0,0-5.24,0l-8,14A3,3,0,0,0,3.94,22H20.06a3,3,0,0,0,2.61-4.53Zm-1.73,2a1,1,0,0,1-.88.51H3.94a1,1,0,0,1-.88-.51,1,1,0,0,1,0-1l8-14a1,1,0,0,1,1.78,0l8.05,14A1,1,0,0,1,20.94,19.49ZM12,8a1,1,0,0,0-1,1v4a1,1,0,0,0,2,0V9A1,1,0,0,0,12,8Z"/></svg>
<svg class="a" style="left:716px;top:282px" width="1316" height="380" shape-rendering="crispEdges"><rect x="0" y="2" width="1316" height="2" fill="rgba(255,255,255,0.18)"/><rect x="0" y="76" width="1316" height="2" fill="rgba(255,255,255,0.18)"/><rect x="0" y="150" width="1316" height="2" fill="rgba(255,255,255,0.18)"/><rect x="0" y="225" width="1316" height="2" fill="rgba(255,255,255,0.18)"/><rect x="0" y="300" width="1316" height="2" fill="rgba(255,255,255,0.18)"/><rect x="0" y="375" width="1316" height="2" fill="rgba(255,255,255,0.18)"/><rect x="164" y="2" width="2" height="375" fill="rgba(255,255,255,0.18)"/><rect x="383" y="2" width="2" height="375" fill="rgba(255,255,255,0.18)"/><rect x="602" y="2" width="2" height="375" fill="rgba(255,255,255,0.18)"/><rect x="822" y="2" width="2" height="375" fill="rgba(255,255,255,0.18)"/><rect x="1041" y="2" width="2" height="375" fill="rgba(255,255,255,0.18)"/><rect x="1260" y="2" width="2" height="375" fill="rgba(255,255,255,0.18)"/></svg>
<span class="t" style="left:659.22px;top:271.98px;font-size:24px;letter-spacing:0.000px;color:#ccccdc;transform:scaleX(0.9810);-webkit-text-stroke:0.45px #ccccdc;">1.00</span>
<span class="t" style="left:656.10px;top:345.98px;font-size:24px;letter-spacing:0.000px;color:#ccccdc;transform:scaleX(1.0482);-webkit-text-stroke:0.45px #ccccdc;">0.80</span>
<span class="t" style="left:656.10px;top:419.98px;font-size:24px;letter-spacing:0.000px;color:#ccccdc;transform:scaleX(1.0482);-webkit-text-stroke:0.45px #ccccdc;">0.60</span>
<span class="t" style="left:655.10px;top:494.98px;font-size:24px;letter-spacing:0.000px;color:#ccccdc;transform:scaleX(1.0698);-webkit-text-stroke:0.45px #ccccdc;">0.40</span>
<span class="t" style="left:655.10px;top:569.98px;font-size:24px;letter-spacing:0.000px;color:#ccccdc;transform:scaleX(1.0698);-webkit-text-stroke:0.45px #ccccdc;">0.20</span>
<span class="t" style="left:655.10px;top:644.98px;font-size:24px;letter-spacing:0.000px;color:#ccccdc;transform:scaleX(1.0698);-webkit-text-stroke:0.45px #ccccdc;">0.00</span>
<span class="t" style="left:846.50px;top:673.68px;font-size:24px;letter-spacing:0.210px;color:#ccccdc;transform:scaleX(1.0900);-webkit-text-stroke:0.45px #ccccdc;">04:00</span>
<span class="t" style="left:1065.70px;top:673.68px;font-size:24px;letter-spacing:0.210px;color:#ccccdc;transform:scaleX(1.0900);-webkit-text-stroke:0.45px #ccccdc;">06:00</span>
<span class="t" style="left:1284.90px;top:673.68px;font-size:24px;letter-spacing:0.210px;color:#ccccdc;transform:scaleX(1.0900);-webkit-text-stroke:0.45px #ccccdc;">08:00</span>
<span class="t" style="left:1506.82px;top:673.68px;font-size:24px;letter-spacing:0.000px;color:#ccccdc;transform:scaleX(1.0305);-webkit-text-stroke:0.45px #ccccdc;">10:00</span>
<span class="t" style="left:1726.02px;top:673.68px;font-size:24px;letter-spacing:0.000px;color:#ccccdc;transform:scaleX(1.0305);-webkit-text-stroke:0.45px #ccccdc;">12:00</span>
<span class="t" style="left:1945.22px;top:673.68px;font-size:24px;letter-spacing:0.000px;color:#ccccdc;transform:scaleX(1.0305);-webkit-text-stroke:0.45px #ccccdc;">14:00</span>
<span class="t" style="left:1306.68px;top:412.00px;font-size:28px;letter-spacing:-0.000px;color:#ccccdc;transform:scaleX(1.0591);-webkit-text-stroke:0.45px #ccccdc;">No data</span>
<span class="t" style="left:1828.35px;top:723.68px;font-size:24px;letter-spacing:0.000px;color:#3aa3e8;transform:scaleX(1.0510);font-weight:700;-webkit-text-stroke:0.45px #3aa3e8;">min</span>
<span class="t" style="left:1892.78px;top:723.68px;font-size:24px;letter-spacing:-0.000px;color:#3aa3e8;transform:scaleX(1.0233);font-weight:700;-webkit-text-stroke:0.45px #3aa3e8;">max</span>
<span class="t" style="left:1963.70px;top:723.68px;font-size:24px;letter-spacing:0.000px;color:#3aa3e8;transform:scaleX(1.0296);font-weight:700;-webkit-text-stroke:0.45px #3aa3e8;">avg</span>
<svg class="a" style="left:2006.00px;top:721.50px" width="32" height="32" viewBox="0 0 24 24" fill="#3aa3e8"><path d="M17,9.17a1,1,0,0,0-1.41,0L12,12.71,8.46,9.17a1,1,0,0,0-1.41,0,1,1,0,0,0,0,1.42l4.24,4.24a1,1,0,0,0,1.42,0L17,10.59A1,1,0,0,0,17,9.17Z"/></svg>
</section>
<section aria-label="MyRocks Cache Data Bytes R/W">
<div class="a panel" style="left:2102px;top:182px"></div>
<span class="t" style="left:2119.86px;top:202.50px;font-size:28px;letter-spacing:-0.000px;color:#ccccdc;transform:scaleX(1.0707);-webkit-text-stroke:0.95px #ccccdc;">MyRocks Cache Data Bytes R/W</span>
<svg class="a" style="left:2593.00px;top:199.70px" width="33" height="33" viewBox="0 0 24 24" fill="#fbad37"><path d="M12,16a1,1,0,1,0,1,1A1,1,0,0,0,12,16Zm10.67,1.47-8.05-14a3,3,0,0,0-5.24,0l-8,14A3,3,0,0,0,3.94,22H20.06a3,3,0,0,0,2.61-4.53Zm-1.73,2a1,1,0,0,1-.88.51H3.94a1,1,0,0,1-.88-.51,1,1,0,0,1,0-1l8-14a1,1,0,0,1,1.78,0l8.05,14A1,1,0,0,1,20.94,19.49ZM12,8a1,1,0,0,0-1,1v4a1,1,0,0,0,2,0V9A1,1,0,0,0,12,8Z"/></svg>
<svg class="a" style="left:2208px;top:282px" width="1292" height="380" shape-rendering="crispEdges"><rect x="0" y="2" width="1292" height="2" fill="rgba(255,255,255,0.18)"/><rect x="0" y="76" width="1292" height="2" fill="rgba(255,255,255,0.18)"/><rect x="0" y="150" width="1292" height="2" fill="rgba(255,255,255,0.18)"/><rect x="0" y="225" width="1292" height="2" fill="rgba(255,255,255,0.18)"/><rect x="0" y="300" width="1292" height="2" fill="rgba(255,255,255,0.18)"/><rect x="0" y="375" width="1292" height="2" fill="rgba(255,255,255,0.18)"/><rect x="160" y="2" width="2" height="375" fill="rgba(255,255,255,0.18)"/><rect x="375" y="2" width="2" height="375" fill="rgba(255,255,255,0.18)"/><rect x="590" y="2" width="2" height="375" fill="rgba(255,255,255,0.18)"/><rect x="806" y="2" width="2" height="375" fill="rgba(255,255,255,0.18)"/><rect x="1021" y="2" width="2" height="375" fill="rgba(255,255,255,0.18)"/><rect x="1236" y="2" width="2" height="375" fill="rgba(255,255,255,0.18)"/></svg>
<span class="t" style="left:2128.22px;top:271.98px;font-size:24px;letter-spacing:0.000px;color:#ccccdc;transform:scaleX(0.9840);-webkit-text-stroke:0.45px #ccccdc;">1.00 B</span>
<span class="t" style="left:2124.80px;top:345.98px;font-size:24px;letter-spacing:0.000px;color:#ccccdc;transform:scaleX(1.0339);-webkit-text-stroke:0.45px #ccccdc;">0.80 B</span>
<span class="t" style="left:2124.80px;top:419.98px;font-size:24px;letter-spacing:0.000px;color:#ccccdc;transform:scaleX(1.0339);-webkit-text-stroke:0.45px #ccccdc;">0.60 B</span>
<span class="t" style="left:2123.80px;top:494.98px;font-size:24px;letter-spacing:0.000px;color:#ccccdc;transform:scaleX(1.0486);-webkit-text-stroke:0.45px #ccccdc;">0.40 B</span>
<span class="t" style="left:2123.80px;top:569.98px;font-size:24px;letter-spacing:0.000px;color:#ccccdc;transform:scaleX(1.0486);-webkit-text-stroke:0.45px #ccccdc;">0.20 B</span>
<span class="t" style="left:2123.80px;top:644.98px;font-size:24px;letter-spacing:0.000px;color:#ccccdc;transform:scaleX(1.0486);-webkit-text-stroke:0.45px #ccccdc;">0.00 B</span>
<span class="t" style="left:2334.50px;top:673.68px;font-size:24px;letter-spacing:0.210px;color:#ccccdc;transform:scaleX(1.0900);-webkit-text-stroke:0.45px #ccccdc;">04:00</span>
<span class="t" style="left:2549.70px;top:673.68px;font-size:24px;letter-spacing:0.210px;color:#ccccdc;transform:scaleX(1.0900);-webkit-text-stroke:0.45px #ccccdc;">06:00</span>
<span class="t" style="left:2764.90px;top:673.68px;font-size:24px;letter-spacing:0.210px;color:#ccccdc;transform:scaleX(1.0900);-webkit-text-stroke:0.45px #ccccdc;">08:00</span>
<span class="t" style="left:2982.82px;top:673.68px;font-size:24px;letter-spacing:0.000px;color:#ccccdc;transform:scaleX(1.0305);-webkit-text-stroke:0.45px #ccccdc;">10:00</span>
<span class="t" style="left:3198.02px;top:673.68px;font-size:24px;letter-spacing:0.000px;color:#ccccdc;transform:scaleX(1.0305);-webkit-text-stroke:0.45px #ccccdc;">12:00</span>
<span class="t" style="left:3413.22px;top:673.68px;font-size:24px;letter-spacing:0.000px;color:#ccccdc;transform:scaleX(1.0305);-webkit-text-stroke:0.45px #ccccdc;">14:00</span>
<span class="t" style="left:2774.68px;top:412.00px;font-size:28px;letter-spacing:0.000px;color:#ccccdc;transform:scaleX(1.0591);-webkit-text-stroke:0.45px #ccccdc;">No data</span>
<span class="t" style="left:3296.35px;top:723.68px;font-size:24px;letter-spacing:0.000px;color:#3aa3e8;transform:scaleX(1.0510);font-weight:700;-webkit-text-stroke:0.45px #3aa3e8;">min</span>
<span class="t" style="left:3360.78px;top:723.68px;font-size:24px;letter-spacing:0.000px;color:#3aa3e8;transform:scaleX(1.0233);font-weight:700;-webkit-text-stroke:0.45px #3aa3e8;">max</span>
<span class="t" style="left:3431.70px;top:723.68px;font-size:24px;letter-spacing:0.000px;color:#3aa3e8;transform:scaleX(1.0296);font-weight:700;-webkit-text-stroke:0.45px #3aa3e8;">avg</span>
<svg class="a" style="left:3474.00px;top:721.50px" width="32" height="32" viewBox="0 0 24 24" fill="#3aa3e8"><path d="M17,9.17a1,1,0,0,0-1.41,0L12,12.71,8.46,9.17a1,1,0,0,0-1.41,0,1,1,0,0,0,0,1.42l4.24,4.24a1,1,0,0,0,1.42,0L17,10.59A1,1,0,0,0,17,9.17Z"/></svg>
</section>
<section aria-label="MyRocks Cache Index Hit Rate">
<div class="a panel" style="left:634px;top:790px"></div>
<span class="t" style="left:651.85px;top:810.50px;font-size:28px;letter-spacing:-0.000px;color:#ccccdc;transform:scaleX(1.0746);-webkit-text-stroke:0.95px #ccccdc;">MyRocks Cache Index Hit Rate</span>
<svg class="a" style="left:1102.00px;top:807.70px" width="33" height="33" viewBox="0 0 24 24" fill="#fbad37"><path d="M12,16a1,1,0,1,0,1,1A1,1,0,0,0,12,16Zm10.67,1.47-8.05-14a3,3,0,0,0-5.24,0l-8,14A3,3,0,0,0,3.94,22H20.06a3,3,0,0,0,2.61-4.53Zm-1.73,2a1,1,0,0,1-.88.51H3.94a1,1,0,0,1-.88-.51,1,1,0,0,1,0-1l8-14a1,1,0,0,1,1.78,0l8.05,14A1,1,0,0,1,20.94,19.49ZM12,8a1,1,0,0,0-1,1v4a1,1,0,0,0,2,0V9A1,1,0,0,0,12,8Z"/></svg>
<svg class="a" style="left:716px;top:890px" width="1316" height="380" shape-rendering="crispEdges"><rect x="0" y="2" width="1316" height="2" fill="rgba(255,255,255,0.18)"/><rect x="0" y="76" width="1316" height="2" fill="rgba(255,255,255,0.18)"/><rect x="0" y="150" width="1316" height="2" fill="rgba(255,255,255,0.18)"/><rect x="0" y="225" width="1316" height="2" fill="rgba(255,255,255,0.18)"/><rect x="0" y="300" width="1316" height="2" fill="rgba(255,255,255,0.18)"/><rect x="0" y="375" width="1316" height="2" fill="rgba(255,255,255,0.18)"/><rect x="164" y="2" width="2" height="375" fill="rgba(255,255,255,0.18)"/><rect x="383" y="2" width="2" height="375" fill="rgba(255,255,255,0.18)"/><rect x="602" y="2" width="2" height="375" fill="rgba(255,255,255,0.18)"/><rect x="822" y="2" width="2" height="375" fill="rgba(255,255,255,0.18)"/><rect x="1041" y="2" width="2" height="375" fill="rgba(255,255,255,0.18)"/><rect x="1260" y="2" width="2" height="375" fill="rgba(255,255,255,0.18)"/></svg>
<span class="t" style="left:659.22px;top:879.98px;font-size:24px;letter-spacing:0.000px;color:#ccccdc;transform:scaleX(0.9810);-webkit-text-stroke:0.45px #ccccdc;">1.00</span>
<span class="t" style="left:656.10px;top:953.98px;font-size:24px;letter-spacing:0.000px;color:#ccccdc;transform:scaleX(1.0482);-webkit-text-stroke:0.45px #ccccdc;">0.80</span>
<span class="t" style="left:656.10px;top:1027.98px;font-size:24px;letter-spacing:0.000px;color:#ccccdc;transform:scaleX(1.0482);-webkit-text-stroke:0.45px #ccccdc;">0.60</span>
<span class="t" style="left:655.10px;top:1102.98px;font-size:24px;letter-spacing:0.000px;color:#ccccdc;transform:scaleX(1.0698);-webkit-text-stroke:0.45px #ccccdc;">0.40</span>
<span class="t" style="left:655.10px;top:1177.98px;font-size:24px;letter-spacing:0.000px;color:#ccccdc;transform:scaleX(1.0698);-webkit-text-stroke:0.45px #ccccdc;">0.20</span>
<span class="t" style="left:655.10px;top:1252.98px;font-size:24px;letter-spacing:0.000px;color:#ccccdc;transform:scaleX(1.0698);-webkit-text-stroke:0.45px #ccccdc;">0.00</span>
<span class="t" style="left:846.50px;top:1281.68px;font-size:24px;letter-spacing:0.210px;color:#ccccdc;transform:scaleX(1.0900);-webkit-text-stroke:0.45px #ccccdc;">04:00</span>
<span class="t" style="left:1065.70px;top:1281.68px;font-size:24px;letter-spacing:0.210px;color:#ccccdc;transform:scaleX(1.0900);-webkit-text-stroke:0.45px #ccccdc;">06:00</span>
<span class="t" style="left:1284.90px;top:1281.68px;font-size:24px;letter-spacing:0.210px;color:#ccccdc;transform:scaleX(1.0900);-webkit-text-stroke:0.45px #ccccdc;">08:00</span>
<span class="t" style="left:1506.82px;top:1281.68px;font-size:24px;letter-spacing:0.000px;color:#ccccdc;transform:scaleX(1.0305);-webkit-text-stroke:0.45px #ccccdc;">10:00</span>
<span class="t" style="left:1726.02px;top:1281.68px;font-size:24px;letter-spacing:0.000px;color:#ccccdc;transform:scaleX(1.0305);-webkit-text-stroke:0.45px #ccccdc;">12:00</span>
<span class="t" style="left:1945.22px;top:1281.68px;font-size:24px;letter-spacing:0.000px;color:#ccccdc;transform:scaleX(1.0305);-webkit-text-stroke:0.45px #ccccdc;">14:00</span>
<span class="t" style="left:1306.68px;top:1020.00px;font-size:28px;letter-spacing:-0.000px;color:#ccccdc;transform:scaleX(1.0591);-webkit-text-stroke:0.45px #ccccdc;">No data</span>
<span class="t" style="left:1828.35px;top:1331.68px;font-size:24px;letter-spacing:0.000px;color:#3aa3e8;transform:scaleX(1.0510);font-weight:700;-webkit-text-stroke:0.45px #3aa3e8;">min</span>
<span class="t" style="left:1892.78px;top:1331.68px;font-size:24px;letter-spacing:-0.000px;color:#3aa3e8;transform:scaleX(1.0233);font-weight:700;-webkit-text-stroke:0.45px #3aa3e8;">max</span>
<span class="t" style="left:1963.70px;top:1331.68px;font-size:24px;letter-spacing:0.000px;color:#3aa3e8;transform:scaleX(1.0296);font-weight:700;-webkit-text-stroke:0.45px #3aa3e8;">avg</span>
<svg class="a" style="left:2006.00px;top:1329.50px" width="32" height="32" viewBox="0 0 24 24" fill="#3aa3e8"><path d="M17,9.17a1,1,0,0,0-1.41,0L12,12.71,8.46,9.17a1,1,0,0,0-1.41,0,1,1,0,0,0,0,1.42l4.24,4.24a1,1,0,0,0,1.42,0L17,10.59A1,1,0,0,0,17,9.17Z"/></svg>
</section>
<section aria-label="MyRocks Cache Index">
<div class="a panel" style="left:2102px;top:790px"></div>
<span class="t" style="left:2119.84px;top:810.50px;font-size:28px;letter-spacing:0.000px;color:#ccccdc;transform:scaleX(1.0787);-webkit-text-stroke:0.95px #ccccdc;">MyRocks Cache Index</span>
<svg class="a" style="left:2454.70px;top:807.70px" width="33" height="33" viewBox="0 0 24 24" fill="#fbad37"><path d="M12,16a1,1,0,1,0,1,1A1,1,0,0,0,12,16Zm10.67,1.47-8.05-14a3,3,0,0,0-5.24,0l-8,14A3,3,0,0,0,3.94,22H20.06a3,3,0,0,0,2.61-4.53Zm-1.73,2a1,1,0,0,1-.88.51H3.94a1,1,0,0,1-.88-.51,1,1,0,0,1,0-1l8-14a1,1,0,0,1,1.78,0l8.05,14A1,1,0,0,1,20.94,19.49ZM12,8a1,1,0,0,0-1,1v4a1,1,0,0,0,2,0V9A1,1,0,0,0,12,8Z"/></svg>
<svg class="a" style="left:2208px;top:890px" width="1292" height="380" shape-rendering="crispEdges"><rect x="0" y="2" width="1292" height="2" fill="rgba(255,255,255,0.18)"/><rect x="0" y="76" width="1292" height="2" fill="rgba(255,255,255,0.18)"/><rect x="0" y="150" width="1292" height="2" fill="rgba(255,255,255,0.18)"/><rect x="0" y="225" width="1292" height="2" fill="rgba(255,255,255,0.18)"/><rect x="0" y="300" width="1292" height="2" fill="rgba(255,255,255,0.18)"/><rect x="0" y="375" width="1292" height="2" fill="rgba(255,255,255,0.18)"/><rect x="160" y="2" width="2" height="375" fill="rgba(255,255,255,0.18)"/><rect x="375" y="2" width="2" height="375" fill="rgba(255,255,255,0.18)"/><rect x="590" y="2" width="2" height="375" fill="rgba(255,255,255,0.18)"/><rect x="806" y="2" width="2" height="375" fill="rgba(255,255,255,0.18)"/><rect x="1021" y="2" width="2" height="375" fill="rgba(255,255,255,0.18)"/><rect x="1236" y="2" width="2" height="375" fill="rgba(255,255,255,0.18)"/></svg>
<span class="t" style="left:2128.22px;top:879.98px;font-size:24px;letter-spacing:0.000px;color:#ccccdc;transform:scaleX(0.9840);-webkit-text-stroke:0.45px #ccccdc;">1.00 B</span>
<span class="t" style="left:2124.80px;top:953.98px;font-size:24px;letter-spacing:0.000px;color:#ccccdc;transform:scaleX(1.0339);-webkit-text-stroke:0.45px #ccccdc;">0.80 B</span>
<span class="t" style="left:2124.80px;top:1027.98px;font-size:24px;letter-spacing:0.000px;color:#ccccdc;transform:scaleX(1.0339);-webkit-text-stroke:0.45px #ccccdc;">0.60 B</span>
<span class="t" style="left:2123.80px;top:1102.98px;font-size:24px;letter-spacing:0.000px;color:#ccccdc;transform:scaleX(1.0486);-webkit-text-stroke:0.45px #ccccdc;">0.40 B</span>
<span class="t" style="left:2123.80px;top:1177.98px;font-size:24px;letter-spacing:0.000px;color:#ccccdc;transform:scaleX(1.0486);-webkit-text-stroke:0.45px #ccccdc;">0.20 B</span>
<span class="t" style="left:2123.80px;top:1252.98px;font-size:24px;letter-spacing:0.000px;color:#ccccdc;transform:scaleX(1.0486);-webkit-text-stroke:0.45px #ccccdc;">0.00 B</span>
<span class="t" style="left:2334.50px;top:1281.68px;font-size:24px;letter-spacing:0.210px;color:#ccccdc;transform:scaleX(1.0900);-webkit-text-stroke:0.45px #ccccdc;">04:00</span>
<span class="t" style="left:2549.70px;top:1281.68px;font-size:24px;letter-spacing:0.210px;color:#ccccdc;transform:scaleX(1.0900);-webkit-text-stroke:0.45px #ccccdc;">06:00</span>
<span class="t" style="left:2764.90px;top:1281.68px;font-size:24px;letter-spacing:0.210px;color:#ccccdc;transform:scaleX(1.0900);-webkit-text-stroke:0.45px #ccccdc;">08:00</span>
<span class="t" style="left:2982.82px;top:1281.68px;font-size:24px;letter-spacing:0.000px;color:#ccccdc;transform:scaleX(1.0305);-webkit-text-stroke:0.45px #ccccdc;">10:00</span>
<span class="t" style="left:3198.02px;top:1281.68px;font-size:24px;letter-spacing:0.000px;color:#ccccdc;transform:scaleX(1.0305);-webkit-text-stroke:0.45px #ccccdc;">12:00</span>
<span class="t" style="left:3413.22px;top:1281.68px;font-size:24px;letter-spacing:0.000px;color:#ccccdc;transform:scaleX(1.0305);-webkit-text-stroke:0.45px #ccccdc;">14:00</span>
<span class="t" style="left:2774.68px;top:1020.00px;font-size:28px;letter-spacing:0.000px;color:#ccccdc;transform:scaleX(1.0591);-webkit-text-stroke:0.45px #ccccdc;">No data</span>
<span class="t" style="left:3296.35px;top:1331.68px;font-size:24px;letter-spacing:0.000px;color:#3aa3e8;transform:scaleX(1.0510);font-weight:700;-webkit-text-stroke:0.45px #3aa3e8;">min</span>
<span class="t" style="left:3360.78px;top:1331.68px;font-size:24px;letter-spacing:0.000px;color:#3aa3e8;transform:scaleX(1.0233);font-weight:700;-webkit-text-stroke:0.45px #3aa3e8;">max</span>
<span class="t" style="left:3431.70px;top:1331.68px;font-size:24px;letter-spacing:0.000px;color:#3aa3e8;transform:scaleX(1.0296);font-weight:700;-webkit-text-stroke:0.45px #3aa3e8;">avg</span>
<svg class="a" style="left:3474.00px;top:1329.50px" width="32" height="32" viewBox="0 0 24 24" fill="#3aa3e8"><path d="M17,9.17a1,1,0,0,0-1.41,0L12,12.71,8.46,9.17a1,1,0,0,0-1.41,0,1,1,0,0,0,0,1.42l4.24,4.24a1,1,0,0,0,1.42,0L17,10.59A1,1,0,0,0,17,9.17Z"/></svg>
</section>
<section aria-label="MyRocks Cache Filter Hit Rate">
<div class="a panel" style="left:634px;top:1398px"></div>
<span class="t" style="left:651.84px;top:1418.50px;font-size:28px;letter-spacing:0.000px;color:#ccccdc;transform:scaleX(1.0776);-webkit-text-stroke:0.95px #ccccdc;">MyRocks Cache Filter Hit Rate</span>
<svg class="a" style="left:1096.40px;top:1415.70px" width="33" height="33" viewBox="0 0 24 24" fill="#fbad37"><path d="M12,16a1,1,0,1,0,1,1A1,1,0,0,0,12,16Zm10.67,1.47-8.05-14a3,3,0,0,0-5.24,0l-8,14A3,3,0,0,0,3.94,22H20.06a3,3,0,0,0,2.61-4.53Zm-1.73,2a1,1,0,0,1-.88.51H3.94a1,1,0,0,1-.88-.51,1,1,0,0,1,0-1l8-14a1,1,0,0,1,1.78,0l8.05,14A1,1,0,0,1,20.94,19.49ZM12,8a1,1,0,0,0-1,1v4a1,1,0,0,0,2,0V9A1,1,0,0,0,12,8Z"/></svg>
<svg class="a" style="left:716px;top:1498px" width="1316" height="380" shape-rendering="crispEdges"><rect x="0" y="2" width="1316" height="2" fill="rgba(255,255,255,0.18)"/><rect x="0" y="76" width="1316" height="2" fill="rgba(255,255,255,0.18)"/><rect x="0" y="150" width="1316" height="2" fill="rgba(255,255,255,0.18)"/><rect x="0" y="225" width="1316" height="2" fill="rgba(255,255,255,0.18)"/><rect x="0" y="300" width="1316" height="2" fill="rgba(255,255,255,0.18)"/><rect x="0" y="375" width="1316" height="2" fill="rgba(255,255,255,0.18)"/><rect x="164" y="2" width="2" height="375" fill="rgba(255,255,255,0.18)"/><rect x="383" y="2" width="2" height="375" fill="rgba(255,255,255,0.18)"/><rect x="602" y="2" width="2" height="375" fill="rgba(255,255,255,0.18)"/><rect x="822" y="2" width="2" height="375" fill="rgba(255,255,255,0.18)"/><rect x="1041" y="2" width="2" height="375" fill="rgba(255,255,255,0.18)"/><rect x="1260" y="2" width="2" height="375" fill="rgba(255,255,255,0.18)"/></svg>
<span class="t" style="left:659.22px;top:1487.98px;font-size:24px;letter-spacing:0.000px;color:#ccccdc;transform:scaleX(0.9810);-webkit-text-stroke:0.45px #ccccdc;">1.00</span>
<span class="t" style="left:656.10px;top:1561.98px;font-size:24px;letter-spacing:0.000px;color:#ccccdc;transform:scaleX(1.0482);-webkit-text-stroke:0.45px #ccccdc;">0.80</span>
<span class="t" style="left:656.10px;top:1635.98px;font-size:24px;letter-spacing:0.000px;color:#ccccdc;transform:scaleX(1.0482);-webkit-text-stroke:0.45px #ccccdc;">0.60</span>
<span class="t" style="left:655.10px;top:1710.98px;font-size:24px;letter-spacing:0.000px;color:#ccccdc;transform:scaleX(1.0698);-webkit-text-stroke:0.45px #ccccdc;">0.40</span>
<span class="t" style="left:655.10px;top:1785.98px;font-size:24px;letter-spacing:0.000px;color:#ccccdc;transform:scaleX(1.0698);-webkit-text-stroke:0.45px #ccccdc;">0.20</span>
<span class="t" style="left:655.10px;top:1860.98px;font-size:24px;letter-spacing:0.000px;color:#ccccdc;transform:scaleX(1.0698);-webkit-text-stroke:0.45px #ccccdc;">0.00</span>
<span class="t" style="left:846.50px;top:1889.68px;font-size:24px;letter-spacing:0.210px;color:#ccccdc;transform:scaleX(1.0900);-webkit-text-stroke:0.45px #ccccdc;">04:00</span>
<span class="t" style="left:1065.70px;top:1889.68px;font-size:24px;letter-spacing:0.210px;color:#ccccdc;transform:scaleX(1.0900);-webkit-text-stroke:0.45px #ccccdc;">06:00</span>
<span class="t" style="left:1284.90px;top:1889.68px;font-size:24px;letter-spacing:0.210px;color:#ccccdc;transform:scaleX(1.0900);-webkit-text-stroke:0.45px #ccccdc;">08:00</span>
<span class="t" style="left:1506.82px;top:1889.68px;font-size:24px;letter-spacing:0.000px;color:#ccccdc;transform:scaleX(1.0305);-webkit-text-stroke:0.45px #ccccdc;">10:00</span>
<span class="t" style="left:1726.02px;top:1889.68px;font-size:24px;letter-spacing:0.000px;color:#ccccdc;transform:scaleX(1.0305);-webkit-text-stroke:0.45px #ccccdc;">12:00</span>
<span class="t" style="left:1945.22px;top:1889.68px;font-size:24px;letter-spacing:0.000px;color:#ccccdc;transform:scaleX(1.0305);-webkit-text-stroke:0.45px #ccccdc;">14:00</span>
<span class="t" style="left:1306.68px;top:1628.00px;font-size:28px;letter-spacing:-0.000px;color:#ccccdc;transform:scaleX(1.0591);-webkit-text-stroke:0.45px #ccccdc;">No data</span>
<span class="t" style="left:1828.35px;top:1939.68px;font-size:24px;letter-spacing:0.000px;color:#3aa3e8;transform:scaleX(1.0510);font-weight:700;-webkit-text-stroke:0.45px #3aa3e8;">min</span>
<span class="t" style="left:1892.78px;top:1939.68px;font-size:24px;letter-spacing:-0.000px;color:#3aa3e8;transform:scaleX(1.0233);font-weight:700;-webkit-text-stroke:0.45px #3aa3e8;">max</span>
<span class="t" style="left:1963.70px;top:1939.68px;font-size:24px;letter-spacing:0.000px;color:#3aa3e8;transform:scaleX(1.0296);font-weight:700;-webkit-text-stroke:0.45px #3aa3e8;">avg</span>
<svg class="a" style="left:2006.00px;top:1937.50px" width="32" height="32" viewBox="0 0 24 24" fill="#3aa3e8"><path d="M17,9.17a1,1,0,0,0-1.41,0L12,12.71,8.46,9.17a1,1,0,0,0-1.41,0,1,1,0,0,0,0,1.42l4.24,4.24a1,1,0,0,0,1.42,0L17,10.59A1,1,0,0,0,17,9.17Z"/></svg>
</section>
<section aria-label="MyRocks Cache Filter">
<div class="a panel" style="left:2102px;top:1398px"></div>
<span class="t" style="left:2119.83px;top:1418.50px;font-size:28px;letter-spacing:0.000px;color:#ccccdc;transform:scaleX(1.0865);-webkit-text-stroke:0.95px #ccccdc;">MyRocks Cache Filter</span>
<svg class="a" style="left:2449.70px;top:1415.70px" width="33" height="33" viewBox="0 0 24 24" fill="#fbad37"><path d="M12,16a1,1,0,1,0,1,1A1,1,0,0,0,12,16Zm10.67,1.47-8.05-14a3,3,0,0,0-5.24,0l-8,14A3,3,0,0,0,3.94,22H20.06a3,3,0,0,0,2.61-4.53Zm-1.73,2a1,1,0,0,1-.88.51H3.94a1,1,0,0,1-.88-.51,1,1,0,0,1,0-1l8-14a1,1,0,0,1,1.78,0l8.05,14A1,1,0,0,1,20.94,19.49ZM12,8a1,1,0,0,0-1,1v4a1,1,0,0,0,2,0V9A1,1,0,0,0,12,8Z"/></svg>
<svg class="a" style="left:2184px;top:1498px" width="1316" height="380" shape-rendering="crispEdges"><rect x="0" y="2" width="1316" height="2" fill="rgba(255,255,255,0.18)"/><rect x="0" y="76" width="1316" height="2" fill="rgba(255,255,255,0.18)"/><rect x="0" y="150" width="1316" height="2" fill="rgba(255,255,255,0.18)"/><rect x="0" y="225" width="1316" height="2" fill="rgba(255,255,255,0.18)"/><rect x="0" y="300" width="1316" height="2" fill="rgba(255,255,255,0.18)"/><rect x="0" y="375" width="1316" height="2" fill="rgba(255,255,255,0.18)"/><rect x="164" y="2" width="2" height="375" fill="rgba(255,255,255,0.18)"/><rect x="383" y="2" width="2" height="375" fill="rgba(255,255,255,0.18)"/><rect x="602" y="2" width="2" height="375" fill="rgba(255,255,255,0.18)"/><rect x="822" y="2" width="2" height="375" fill="rgba(255,255,255,0.18)"/><rect x="1041" y="2" width="2" height="375" fill="rgba(255,255,255,0.18)"/><rect x="1260" y="2" width="2" height="375" fill="rgba(255,255,255,0.18)"/></svg>
<span class="t" style="left:2127.22px;top:1487.98px;font-size:24px;letter-spacing:0.000px;color:#ccccdc;transform:scaleX(0.9810);-webkit-text-stroke:0.45px #ccccdc;">1.00</span>
<span class="t" style="left:2124.10px;top:1561.98px;font-size:24px;letter-spacing:0.000px;color:#ccccdc;transform:scaleX(1.0482);-webkit-text-stroke:0.45px #ccccdc;">0.80</span>
<span class="t" style="left:2124.10px;top:1635.98px;font-size:24px;letter-spacing:0.000px;color:#ccccdc;transform:scaleX(1.0482);-webkit-text-stroke:0.45px #ccccdc;">0.60</span>
<span class="t" style="left:2123.10px;top:1710.98px;font-size:24px;letter-spacing:-0.000px;color:#ccccdc;transform:scaleX(1.0698);-webkit-text-stroke:0.45px #ccccdc;">0.40</span>
<span class="t" style="left:2123.10px;top:1785.98px;font-size:24px;letter-spacing:-0.000px;color:#ccccdc;transform:scaleX(1.0698);-webkit-text-stroke:0.45px #ccccdc;">0.20</span>
<span class="t" style="left:2123.10px;top:1860.98px;font-size:24px;letter-spacing:-0.000px;color:#ccccdc;transform:scaleX(1.0698);-webkit-text-stroke:0.45px #ccccdc;">0.00</span>
<span class="t" style="left:2314.50px;top:1889.68px;font-size:24px;letter-spacing:0.210px;color:#ccccdc;transform:scaleX(1.0900);-webkit-text-stroke:0.45px #ccccdc;">04:00</span>
<span class="t" style="left:2533.70px;top:1889.68px;font-size:24px;letter-spacing:0.210px;color:#ccccdc;transform:scaleX(1.0900);-webkit-text-stroke:0.45px #ccccdc;">06:00</span>
<span class="t" style="left:2752.90px;top:1889.68px;font-size:24px;letter-spacing:0.210px;color:#ccccdc;transform:scaleX(1.0900);-webkit-text-stroke:0.45px #ccccdc;">08:00</span>
<span class="t" style="left:2974.82px;top:1889.68px;font-size:24px;letter-spacing:0.000px;color:#ccccdc;transform:scaleX(1.0305);-webkit-text-stroke:0.45px #ccccdc;">10:00</span>
<span class="t" style="left:3194.02px;top:1889.68px;font-size:24px;letter-spacing:0.000px;color:#ccccdc;transform:scaleX(1.0305);-webkit-text-stroke:0.45px #ccccdc;">12:00</span>
<span class="t" style="left:3413.22px;top:1889.68px;font-size:24px;letter-spacing:0.000px;color:#ccccdc;transform:scaleX(1.0305);-webkit-text-stroke:0.45px #ccccdc;">14:00</span>
<span class="t" style="left:2774.68px;top:1628.00px;font-size:28px;letter-spacing:0.000px;color:#ccccdc;transform:scaleX(1.0591);-webkit-text-stroke:0.45px #ccccdc;">No data</span>
<span class="t" style="left:3296.35px;top:1939.68px;font-size:24px;letter-spacing:0.000px;color:#3aa3e8;transform:scaleX(1.0510);font-weight:700;-webkit-text-stroke:0.45px #3aa3e8;">min</span>
<span class="t" style="left:3360.78px;top:1939.68px;font-size:24px;letter-spacing:0.000px;color:#3aa3e8;transform:scaleX(1.0233);font-weight:700;-webkit-text-stroke:0.45px #3aa3e8;">max</span>
<span class="t" style="left:3431.70px;top:1939.68px;font-size:24px;letter-spacing:0.000px;color:#3aa3e8;transform:scaleX(1.0296);font-weight:700;-webkit-text-stroke:0.45px #3aa3e8;">avg</span>
<svg class="a" style="left:3474.00px;top:1937.50px" width="32" height="32" viewBox="0 0 24 24" fill="#3aa3e8"><path d="M17,9.17a1,1,0,0,0-1.41,0L12,12.71,8.46,9.17a1,1,0,0,0-1.41,0,1,1,0,0,0,0,1.42l4.24,4.24a1,1,0,0,0,1.42,0L17,10.59A1,1,0,0,0,17,9.17Z"/></svg>
</section>
</main>
<svg class="a" style="left:1344px;top:138px" width="32" height="44" viewBox="0 0 32 44"><path d="M4.5 4 L4.5 33 L11.5 26.5 L16.5 38.5 L22 36 L17 24.5 L26.5 24.5 Z" fill="#000" stroke="#fff" stroke-width="2.2" stroke-linejoin="round"/></svg>
</div>
</body></html>
